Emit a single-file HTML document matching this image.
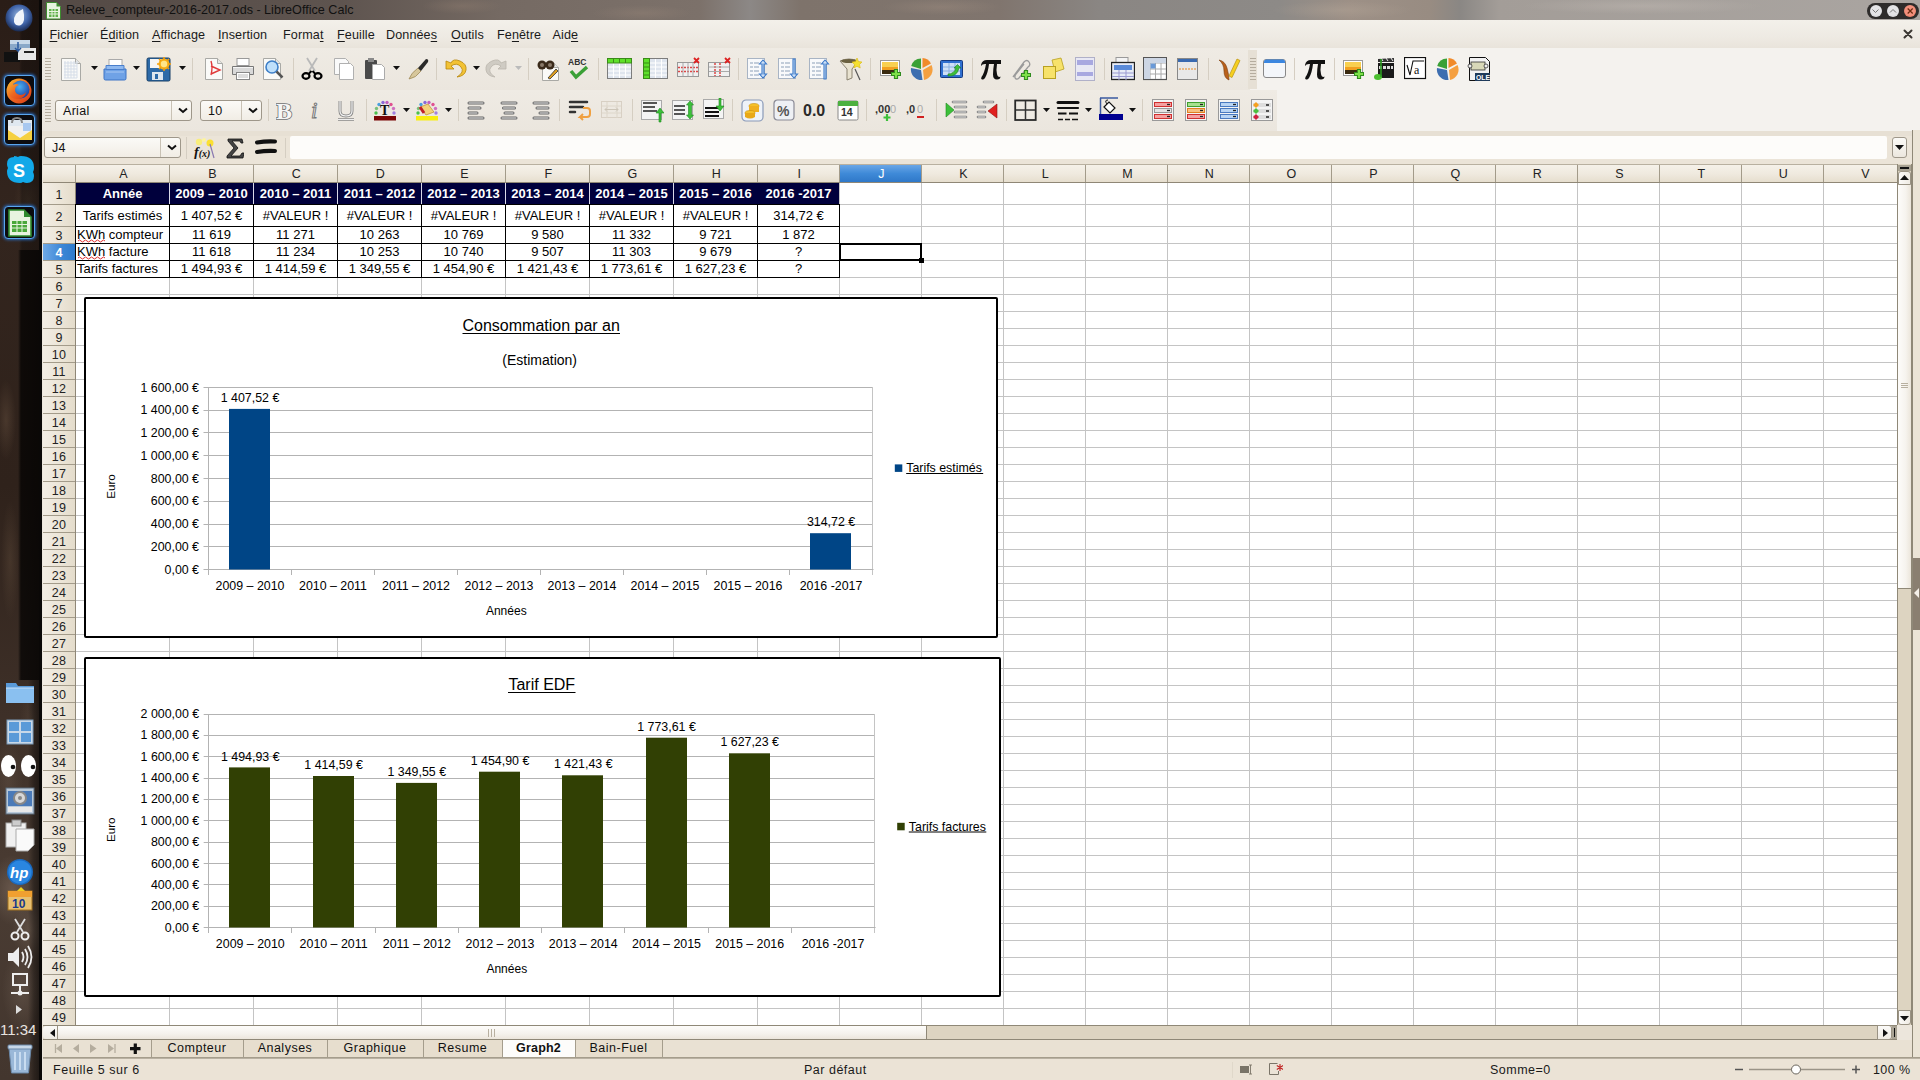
<!DOCTYPE html><html><head><meta charset="utf-8"><title>LibreOffice Calc</title><style>

html,body{margin:0;padding:0;width:1920px;height:1080px;overflow:hidden;background:#ece6dc;font-family:"Liberation Sans", sans-serif;}
div{box-sizing:border-box;}
.ic{position:absolute;}

</style></head><body>
<div style="position:absolute;left:0px;top:0px;width:42px;height:1080px;background:radial-gradient(ellipse 10px 40px at 6px 420px, rgba(120,95,75,.35), transparent),radial-gradient(ellipse 9px 60px at 10px 560px, rgba(110,88,68,.3), transparent),radial-gradient(ellipse 22px 35px at 12px 890px, rgba(140,120,105,.45), transparent),radial-gradient(ellipse 18px 30px at 30px 930px, rgba(130,112,98,.4), transparent),radial-gradient(ellipse 20px 40px at 22px 990px, rgba(120,104,92,.4), transparent),radial-gradient(ellipse 15px 40px at 8px 780px, rgba(110,92,78,.35), transparent),radial-gradient(ellipse 12px 30px at 32px 720px, rgba(100,84,70,.3), transparent),radial-gradient(ellipse 14px 25px at 28px 200px, rgba(100,80,62,.3), transparent),linear-gradient(180deg,#2a1d17 0%,#33251e 20%,#2f221b 45%,#3d2f27 65%,#4a3c33 82%,#43362e 100%);"></div>
<div style="position:absolute;left:0px;top:250px;width:42px;height:430px;background:linear-gradient(90deg, rgba(0,0,0,0) 0px, rgba(0,0,0,0) 18px, rgba(0,0,0,.72) 21px, rgba(0,0,0,.78) 39px);"></div>
<div style="position:absolute;left:0px;top:0px;width:42px;height:250px;background:linear-gradient(90deg, rgba(0,0,0,0) 0px, rgba(0,0,0,0) 19px, rgba(0,0,0,.3) 22px, rgba(0,0,0,.35) 39px);"></div>
<div style="position:absolute;left:0px;top:680px;width:42px;height:400px;background:linear-gradient(90deg, rgba(0,0,0,0) 0px, rgba(0,0,0,0) 28px, rgba(0,0,0,.35) 34px, rgba(0,0,0,.5) 39px);"></div>
<div style="position:absolute;left:39px;top:0px;width:3px;height:1080px;background:#0a0807;"></div>
<div style="position:absolute;left:42px;top:0px;width:1878px;height:20px;background:radial-gradient(ellipse 40px 8px at 420px 6px, rgba(150,130,115,.35), transparent),radial-gradient(ellipse 50px 8px at 600px 13px, rgba(160,140,125,.3), transparent),radial-gradient(ellipse 60px 8px at 900px 7px, rgba(170,150,135,.3), transparent),radial-gradient(ellipse 70px 9px at 1300px 10px, rgba(185,170,155,.35), transparent),radial-gradient(ellipse 120px 8px at 1600px 6px, rgba(200,192,185,.35), transparent),linear-gradient(90deg,#544a45 0%,#5e544f 15.9%,#756a63 24.4%,#7c716a 35%,#8c8886 37.7%,#7e736b 40.4%,#80756e 51%,#8a8683 56.3%,#8d8a87 65.9%,#9d9086 69.6%,#988c82 73.9%,#8a8784 75.5%,#a39d98 77.6%,#aaa5a1 100%);"></div>
<svg class="ic" style="left:45px;top:1px" width="17" height="19" viewBox="0 0 17 19"><path d="M1.5 1.5h10l4 4v12.5h-14z" fill="#e8f3e0" stroke="#3d8a2e"/><path d="M11.5 1.5v4h4z" fill="#3d8a2e"/><rect x="4" y="8" width="9" height="8" fill="#5fb14a"/><path d="M4 10.5h9M4 13h9M7 8v8M10 8v8" stroke="#e8f3e0" stroke-width="1"/></svg>
<div style="position:absolute;left:66px;top:3.5px;font-size:12.6px;line-height:1;color:#111;font-weight:normal;white-space:nowrap;letter-spacing:0px;">Releve_compteur-2016-2017.ods - LibreOffice Calc</div>
<div style="position:absolute;left:1867px;top:3px;width:52px;height:16px;background:#2e2c2b;border-radius:8px;"></div>
<div style="position:absolute;left:1869.5px;top:5px;width:12px;height:12px;border-radius:6px;background:radial-gradient(circle at 50% 40%, #e4e4e6 55%, #c8c8cc);"></div>
<div style="position:absolute;left:1887px;top:5px;width:12px;height:12px;border-radius:6px;background:radial-gradient(circle at 50% 40%, #e4e4e6 55%, #c8c8cc);"></div>
<div style="position:absolute;left:1904.2px;top:5px;width:12px;height:12px;border-radius:6px;background:radial-gradient(circle at 50% 40%, #f3907c 55%, #e06a50);"></div>
<svg class="ic" style="left:1867px;top:3px" width="53" height="16" viewBox="0 0 53 16"><path d="M5.5 6.5l3 3 3-3" fill="none" stroke="#777" stroke-width="1"/><path d="M23 9.5l3-3 3 3" fill="none" stroke="#777" stroke-width="1"/><path d="M40.7 5.5l5 5M45.7 5.5l-5 5" fill="none" stroke="#6a2a10" stroke-width="1.2"/></svg>
<div style="position:absolute;left:42px;top:20px;width:1878px;height:28px;background:linear-gradient(180deg,#f3f0ea 0%,#eeeae3 60%,#e9e4db 100%);"></div>
<div style="position:absolute;left:49.5px;top:29px;font-size:12.6px;line-height:1;color:#1a1a1a;font-weight:normal;white-space:nowrap;letter-spacing:0.1px;text-underline-offset:1.5px;"><u>F</u>ichier</div>
<div style="position:absolute;left:100px;top:29px;font-size:12.6px;line-height:1;color:#1a1a1a;font-weight:normal;white-space:nowrap;letter-spacing:0.1px;text-underline-offset:1.5px;">É<u>d</u>ition</div>
<div style="position:absolute;left:152px;top:29px;font-size:12.6px;line-height:1;color:#1a1a1a;font-weight:normal;white-space:nowrap;letter-spacing:0.1px;text-underline-offset:1.5px;"><u>A</u>ffichage</div>
<div style="position:absolute;left:218px;top:29px;font-size:12.6px;line-height:1;color:#1a1a1a;font-weight:normal;white-space:nowrap;letter-spacing:0.1px;text-underline-offset:1.5px;"><u>I</u>nsertion</div>
<div style="position:absolute;left:283px;top:29px;font-size:12.6px;line-height:1;color:#1a1a1a;font-weight:normal;white-space:nowrap;letter-spacing:0.1px;text-underline-offset:1.5px;">Forma<u>t</u></div>
<div style="position:absolute;left:337px;top:29px;font-size:12.6px;line-height:1;color:#1a1a1a;font-weight:normal;white-space:nowrap;letter-spacing:0.1px;text-underline-offset:1.5px;"><u>F</u>euille</div>
<div style="position:absolute;left:386px;top:29px;font-size:12.6px;line-height:1;color:#1a1a1a;font-weight:normal;white-space:nowrap;letter-spacing:0.1px;text-underline-offset:1.5px;">Donnée<u>s</u></div>
<div style="position:absolute;left:451px;top:29px;font-size:12.6px;line-height:1;color:#1a1a1a;font-weight:normal;white-space:nowrap;letter-spacing:0.1px;text-underline-offset:1.5px;"><u>O</u>utils</div>
<div style="position:absolute;left:497px;top:29px;font-size:12.6px;line-height:1;color:#1a1a1a;font-weight:normal;white-space:nowrap;letter-spacing:0.1px;text-underline-offset:1.5px;">Fe<u>n</u>être</div>
<div style="position:absolute;left:552.5px;top:29px;font-size:12.6px;line-height:1;color:#1a1a1a;font-weight:normal;white-space:nowrap;letter-spacing:0.1px;text-underline-offset:1.5px;">Aid<u>e</u></div>
<svg class="ic" style="left:1903px;top:29px" width="10" height="10" viewBox="0 0 10 10"><path d="M1.5 1.5l7 7M8.5 1.5l-7 7" stroke="#3a3632" stroke-width="2" stroke-linecap="round"/></svg>
<div style="position:absolute;left:42px;top:48px;width:1878px;height:83px;background:#f4f2ee;"></div>
<div style="position:absolute;left:42px;top:48px;width:1208px;height:42px;background:linear-gradient(180deg,#efebe4,#ebe6de);"></div>
<div style="position:absolute;left:42px;top:90px;width:1235px;height:41px;background:linear-gradient(180deg,#efebe4,#ebe6de);"></div>
<div style="position:absolute;left:1248px;top:50px;width:9px;height:39px;background:#e6e0d5;"></div>
<div style="position:absolute;left:42px;top:131px;width:1878px;height:5px;background:#e7e0d4;"></div>
<svg class="ic" style="left:45px;top:58px" width="6" height="24" viewBox="0 0 6 24"><path d="M0 0.5h6" stroke="#b5ad9f" stroke-width="1"/><path d="M0 3.5h6" stroke="#b5ad9f" stroke-width="1"/><path d="M0 6.5h6" stroke="#b5ad9f" stroke-width="1"/><path d="M0 9.5h6" stroke="#b5ad9f" stroke-width="1"/><path d="M0 12.5h6" stroke="#b5ad9f" stroke-width="1"/><path d="M0 15.5h6" stroke="#b5ad9f" stroke-width="1"/><path d="M0 18.5h6" stroke="#b5ad9f" stroke-width="1"/><path d="M0 21.5h6" stroke="#b5ad9f" stroke-width="1"/></svg>
<svg class="ic" style="left:45px;top:100px" width="6" height="22" viewBox="0 0 6 22"><path d="M0 0.5h6" stroke="#b5ad9f" stroke-width="1"/><path d="M0 3.5h6" stroke="#b5ad9f" stroke-width="1"/><path d="M0 6.5h6" stroke="#b5ad9f" stroke-width="1"/><path d="M0 9.5h6" stroke="#b5ad9f" stroke-width="1"/><path d="M0 12.5h6" stroke="#b5ad9f" stroke-width="1"/><path d="M0 15.5h6" stroke="#b5ad9f" stroke-width="1"/><path d="M0 18.5h6" stroke="#b5ad9f" stroke-width="1"/><path d="M0 21.5h6" stroke="#b5ad9f" stroke-width="1"/></svg>
<svg class="ic" style="left:1250px;top:58px" width="6" height="24" viewBox="0 0 6 24"><path d="M0 0.5h6" stroke="#b5ad9f" stroke-width="1"/><path d="M0 3.5h6" stroke="#b5ad9f" stroke-width="1"/><path d="M0 6.5h6" stroke="#b5ad9f" stroke-width="1"/><path d="M0 9.5h6" stroke="#b5ad9f" stroke-width="1"/><path d="M0 12.5h6" stroke="#b5ad9f" stroke-width="1"/><path d="M0 15.5h6" stroke="#b5ad9f" stroke-width="1"/><path d="M0 18.5h6" stroke="#b5ad9f" stroke-width="1"/><path d="M0 21.5h6" stroke="#b5ad9f" stroke-width="1"/></svg>
<svg class="ic" style="left:59px;top:57px" width="22" height="24" viewBox="0 0 22 24"><path d="M2.5 1.5h14l5 5v17h-19z" fill="#fafaf8" stroke="#a9a9a5"/><path d="M16.5 1.5v5h5" fill="#e6e6e2" stroke="#a9a9a5"/><path d="M5 6h13" stroke="#d5dde8"/><path d="M5 9h13" stroke="#d5dde8"/><path d="M5 12h13" stroke="#d5dde8"/><path d="M5 15h13" stroke="#d5dde8"/><path d="M5 18h13" stroke="#d5dde8"/><path d="M5 21h13" stroke="#d5dde8"/><path d="M6 4v17" stroke="#d5dde8"/><path d="M9 4v17" stroke="#d5dde8"/><path d="M12 4v17" stroke="#d5dde8"/><path d="M15 4v17" stroke="#d5dde8"/><path d="M18 4v17" stroke="#d5dde8"/></svg>
<svg class="ic" style="left:91px;top:66px" width="7" height="4" viewBox="0 0 7 4"><path d="M0 0h7l-3.5 4z" fill="#111"/></svg>
<svg class="ic" style="left:103px;top:57px" width="24" height="24" viewBox="0 0 24 24"><rect x="6" y="2.5" width="13" height="11" fill="#fff" stroke="#aaa"/><path d="M1 12h22v9.5q0 1.5-1.5 1.5h-19q-1.5 0-1.5-1.5z" fill="#6fa2e6" stroke="#3f74c5"/><path d="M3 8.5h18v4H3z" fill="#8fb9f0" stroke="#4a7fcc"/><path d="M3 15h18" stroke="#a9c8f3"/></svg>
<svg class="ic" style="left:133px;top:66px" width="7" height="4" viewBox="0 0 7 4"><path d="M0 0h7l-3.5 4z" fill="#111"/></svg>
<svg class="ic" style="left:146px;top:57px" width="25" height="25" viewBox="0 0 25 25"><rect x="1" y="1" width="23" height="23" rx="1.5" fill="#2d6aa8" stroke="#173e66"/><rect x="4" y="2" width="14" height="9" fill="#f4f4f4"/><rect x="6" y="15" width="11" height="8" fill="#dde6ee"/><rect x="9" y="17" width="3" height="5" fill="#2d6aa8"/><circle cx="18" cy="7" r="5.5" fill="#f7b11a"/><circle cx="18" cy="7" r="3.2" fill="#fde58a"/><path d="M18 0v3M18 11v3M11 7h3M22 7h3M13 2l2 2M21 10l2 2M23 2l-2 2M13 12l2-2" stroke="#f59e0b" stroke-width="1.5"/></svg>
<svg class="ic" style="left:179px;top:66px" width="7" height="4" viewBox="0 0 7 4"><path d="M0 0h7l-3.5 4z" fill="#111"/></svg>
<div style="position:absolute;left:192px;top:58px;width:1px;height:22px;background:#d5cec2;"></div>
<svg class="ic" style="left:203px;top:57px" width="22" height="24" viewBox="0 0 22 24"><path d="M2.5 1.5h12l5 5v16h-17z" fill="#fafaf8" stroke="#a9a9a5"/><path d="M14.5 1.5v5h5" fill="#e6e6e2" stroke="#a9a9a5"/><path d="M8 4q2 6 0 14M8 9l9 4-9 4" fill="none" stroke="#e03a3a" stroke-width="1.4"/></svg>
<svg class="ic" style="left:231px;top:57px" width="24" height="24" viewBox="0 0 24 24"><rect x="6" y="1.5" width="12" height="7" fill="#fff" stroke="#999"/><path d="M1.5 9.5h21v8h-21z" fill="#d9d9d9" stroke="#777"/><path d="M2 10.5h20" stroke="#f5f5f5"/><rect x="5.5" y="15.5" width="13" height="7" fill="#fff" stroke="#888"/><path d="M7 18h10M7 20h10" stroke="#bbb"/></svg>
<svg class="ic" style="left:262px;top:57px" width="22" height="23" viewBox="0 0 22 23"><path d="M1.5 1.5h12l5 5v16h-17z" fill="#fafaf8" stroke="#a9a9a5"/><path d="M13.5 1.5v5h5" fill="#e6e6e2" stroke="#a9a9a5"/><circle cx="10" cy="10" r="6" fill="#bfe0fb" stroke="#3d7fc8" stroke-width="1.6"/><path d="M14.5 14.5l6 6" stroke="#555" stroke-width="2.5"/></svg>
<div style="position:absolute;left:293px;top:58px;width:1px;height:22px;background:#d5cec2;"></div>
<svg class="ic" style="left:301px;top:57px" width="22" height="23" viewBox="0 0 22 23"><path d="M6 1l8 13M16 1l-8 13" stroke="#b9b9b9" stroke-width="1.8"/><ellipse cx="5" cy="19" rx="3.5" ry="2.8" fill="none" stroke="#000" stroke-width="2.2"/><ellipse cx="17" cy="19" rx="3.5" ry="2.8" fill="none" stroke="#000" stroke-width="2.2"/><path d="M7.5 17l3-3M14.5 17l-3-3" stroke="#000" stroke-width="2"/></svg>
<svg class="ic" style="left:333px;top:57px" width="22" height="24" viewBox="0 0 22 24"><path d="M1.5 1.5h11l3 3v13h-14z" fill="#fafafa" stroke="#b0b0b0"/><path d="M6.5 6.5h11l3 3v13h-14z" fill="#fff" stroke="#b0b0b0"/></svg>
<svg class="ic" style="left:364px;top:57px" width="22" height="24" viewBox="0 0 22 24"><rect x="1" y="3" width="12" height="19" rx="1" fill="#4a4a4a"/><rect x="4" y="1" width="6" height="4" fill="#8a8a8a"/><path d="M8.5 7.5h9l3 3v12h-12z" fill="#fff" stroke="#aaa"/></svg>
<svg class="ic" style="left:393px;top:66px" width="7" height="4" viewBox="0 0 7 4"><path d="M0 0h7l-3.5 4z" fill="#111"/></svg>
<svg class="ic" style="left:406px;top:57px" width="24" height="24" viewBox="0 0 24 24"><path d="M3 22q2-6 9-11l3 3q-5 7-12 8z" fill="#d7c79c" stroke="#9f8c5c" stroke-width=".8"/><path d="M12 11l8-9q3 0 2 3l-7 9z" fill="#2a2a2a"/></svg>
<div style="position:absolute;left:436px;top:58px;width:1px;height:22px;background:#d5cec2;"></div>
<svg class="ic" style="left:443px;top:57px" width="24" height="24" viewBox="0 0 24 24"><path d="M3 4v8h8l-3-3q6-4 10 1t-4 10q8-1 9-7t-6-9-9 2z" fill="#f2c235" stroke="#b8860b" stroke-width=".8"/></svg>
<svg class="ic" style="left:473px;top:66px" width="7" height="4" viewBox="0 0 7 4"><path d="M0 0h7l-3.5 4z" fill="#111"/></svg>
<svg class="ic" style="left:485px;top:57px" width="24" height="24" viewBox="0 0 24 24"><path d="M21 4v8h-8l3-3q-6-4-10 1t4 10q-8-1-9-7t6-9 9 2z" fill="#cfcbc3" stroke="#bab5ac" stroke-width=".8"/></svg>
<svg class="ic" style="left:515px;top:66px" width="7" height="4" viewBox="0 0 7 4"><path d="M0 0h7l-3.5 4z" fill="#bbb"/></svg>
<div style="position:absolute;left:528px;top:58px;width:1px;height:22px;background:#d5cec2;"></div>
<svg class="ic" style="left:536px;top:57px" width="23" height="24" viewBox="0 0 23 24"><path d="M6.5 5.5h11l5 5v13h-16z" fill="#fafaf8" stroke="#a9a9a5"/><path d="M17.5 5.5v5h5" fill="#e6e6e2" stroke="#a9a9a5"/><circle cx="6" cy="8" r="4.5" fill="#3a2a1a"/><circle cx="14" cy="8" r="4.5" fill="#3a2a1a"/><circle cx="6" cy="8" r="2" fill="#8a7a6a"/><circle cx="14" cy="8" r="2" fill="#8a7a6a"/><path d="M12 21l8-9 2 2-8 8z" fill="#e0a020" stroke="#333" stroke-width=".8"/></svg>
<svg class="ic" style="left:567px;top:57px" width="24" height="24" viewBox="0 0 24 24"><text x="1" y="8" font-family="Liberation Sans" font-size="8.5" font-weight="bold" fill="#333">ABC</text><path d="M4 14l5 6 11-10" fill="none" stroke="#3aa036" stroke-width="3.5"/></svg>
<div style="position:absolute;left:598px;top:58px;width:1px;height:22px;background:#d5cec2;"></div>
<svg class="ic" style="left:606px;top:57px" width="27" height="24" viewBox="0 0 27 24"><rect x="1.5" y="1.5" width="24" height="20" fill="#dfe5ee" stroke="#7d7d7d"/><path d="M2 6h23" stroke="#fff" stroke-width="1"/><path d="M2 10h23" stroke="#fff" stroke-width="1"/><path d="M2 14h23" stroke="#fff" stroke-width="1"/><path d="M2 18h23" stroke="#fff" stroke-width="1"/><path d="M7.5 2v19" stroke="#fff" stroke-width="1"/><path d="M13.5 2v19" stroke="#fff" stroke-width="1"/><path d="M19.5 2v19" stroke="#fff" stroke-width="1"/><rect x="1.5" y="1.5" width="24" height="4.5" fill="#5ee02a" stroke="#3a8a18" stroke-width="1"/><path d="M7.5 2v4" stroke="#3a8a18" stroke-width="1"/><path d="M13.5 2v4" stroke="#3a8a18" stroke-width="1"/><path d="M19.5 2v4" stroke="#3a8a18" stroke-width="1"/></svg>
<svg class="ic" style="left:642px;top:57px" width="27" height="24" viewBox="0 0 27 24"><rect x="1.5" y="1.5" width="24" height="20" fill="#dfe5ee" stroke="#7d7d7d"/><path d="M2 6h23" stroke="#fff" stroke-width="1"/><path d="M2 10h23" stroke="#fff" stroke-width="1"/><path d="M2 14h23" stroke="#fff" stroke-width="1"/><path d="M2 18h23" stroke="#fff" stroke-width="1"/><path d="M7.5 2v19" stroke="#fff" stroke-width="1"/><path d="M13.5 2v19" stroke="#fff" stroke-width="1"/><path d="M19.5 2v19" stroke="#fff" stroke-width="1"/><rect x="1.5" y="1.5" width="6" height="20" fill="#5ee02a" stroke="#3a8a18" stroke-width="1"/><path d="M2 6h5" stroke="#3a8a18" stroke-width="1"/><path d="M2 10h5" stroke="#3a8a18" stroke-width="1"/><path d="M2 14h5" stroke="#3a8a18" stroke-width="1"/><path d="M2 18h5" stroke="#3a8a18" stroke-width="1"/></svg>
<svg class="ic" style="left:676px;top:57px" width="24" height="24" viewBox="0 0 24 24"><rect x="1.5" y="5.5" width="21" height="14" fill="#f0f0f0" stroke="#999"/><path d="M2 10.5h20M2 14.5h20" stroke="#d44" stroke-width="1.5" stroke-dasharray="2 1"/><path d="M7 6v13M12 6v13M17 6v13" stroke="#aaa"/><path d="M18 1l5 5M23 1l-5 5" stroke="#d22" stroke-width="1.8"/></svg>
<svg class="ic" style="left:707px;top:57px" width="24" height="24" viewBox="0 0 24 24"><rect x="1.5" y="5.5" width="21" height="14" fill="#f0f0f0" stroke="#999"/><path d="M8 6v13M13 6v13" stroke="#d44" stroke-width="1.5" stroke-dasharray="2 1"/><path d="M2 10h20M2 14.5h20" stroke="#aaa"/><path d="M18 1l5 5M23 1l-5 5" stroke="#d22" stroke-width="1.8"/></svg>
<div style="position:absolute;left:738px;top:58px;width:1px;height:22px;background:#d5cec2;"></div>
<svg class="ic" style="left:746px;top:57px" width="22" height="24" viewBox="0 0 22 24"><rect x="1.5" y="1.5" width="17" height="20" fill="#f8f9fb" stroke="#a8b4c4"/><path d="M4 6h3M8 6h5M4 10h3M8 10h5M4 14h3M8 14h5M4 18h3M8 18h5" stroke="#8da0b8"/><path d="M17 3l-3.5 4h2.5v10h-2.5l3.5 4 3.5-4h-2.5v-10h2.5z" fill="#cde0f7" stroke="#3a78c8" stroke-width="1.1"/></svg>
<svg class="ic" style="left:777px;top:57px" width="22" height="24" viewBox="0 0 22 24"><rect x="1.5" y="1.5" width="17" height="20" fill="#f8f9fb" stroke="#a8b4c4"/><path d="M4 6h3M8 6h5M4 10h3M8 10h5M4 14h3M8 14h5M4 18h3M8 18h5" stroke="#8da0b8"/><path d="M16 2v15h-2.5l3.5 4 3.5-4h-2.5v-15z" fill="#cde0f7" stroke="#3a78c8" stroke-width="1.1"/></svg>
<svg class="ic" style="left:808px;top:57px" width="22" height="24" viewBox="0 0 22 24"><rect x="1.5" y="1.5" width="17" height="20" fill="#f8f9fb" stroke="#a8b4c4"/><path d="M4 6h3M8 6h5M4 10h3M8 10h5M4 14h3M8 14h5M4 18h3M8 18h5" stroke="#8da0b8"/><path d="M16 22v-15h-2.5l3.5-4 3.5 4h-2.5v15z" fill="#cde0f7" stroke="#3a78c8" stroke-width="1.1"/></svg>
<svg class="ic" style="left:839px;top:57px" width="24" height="24" viewBox="0 0 24 24"><path d="M1 4q9-4 18 0l-6 8v9l-5 2v-11z" fill="#e8e2d0" stroke="#8a8270"/><ellipse cx="10" cy="4" rx="8" ry="2" fill="#6a6040"/><path d="M18 1l1.5 3.5 3.5.5-2.5 2.5.7 3.5-3.2-1.7-3.2 1.7.7-3.5-2.5-2.5 3.5-.5z" fill="#f5e030" stroke="#d8b810" stroke-width=".6"/><path d="M16 12l5 11" stroke="#555" stroke-width="1.2"/></svg>
<div style="position:absolute;left:870px;top:58px;width:1px;height:22px;background:#d5cec2;"></div>
<svg class="ic" style="left:879px;top:57px" width="24" height="24" viewBox="0 0 24 24"><rect x="1.5" y="3.5" width="19" height="15" fill="#fff" stroke="#999"/><rect x="3" y="5" width="16" height="12" fill="#f0a020"/><rect x="3" y="5" width="16" height="5" fill="#f8d050"/><path d="M3 13h16v4H3z" fill="#3a2a10"/><path d="M17 12v10M12 17h10" stroke="#2e8b1e" stroke-width="4.2"/><path d="M17 13v8M13 17h8" stroke="#7ee04a" stroke-width="2.2"/></svg>
<svg class="ic" style="left:910px;top:57px" width="23" height="24" viewBox="0 0 23 24"><path d="M11 12L11 1.5A10.5 10.5 0 0 0 1.2 9z" fill="#3aa036"/><path d="M12.5 11L12.5 1A10.5 10.5 0 0 1 21 6.5z" fill="#f18a2a"/><path d="M13 13L21.5 8A10.5 10.5 0 0 1 14 23z" fill="#f5a040"/><path d="M11 13L12.5 23A10.5 10.5 0 0 1 1 11z" fill="#3d6eb0"/></svg>
<svg class="ic" style="left:940px;top:57px" width="24" height="24" viewBox="0 0 24 24"><rect x="0.5" y="3.5" width="22" height="17" rx="1" fill="#2f6fd0" stroke="#163a80"/><rect x="3" y="6" width="17" height="12" fill="#cfe0f7"/><path d="M3 10h17M3 14h17M9 6v12M15 6v12" stroke="#8ab0e0"/><path d="M8 17q6 0 8-6l-2 0 3.5-3.5 3.5 3.5h-2q-2 9-11 8z" fill="#3cc03a" stroke="#207a20" stroke-width=".6"/></svg>
<div style="position:absolute;left:972px;top:58px;width:1px;height:22px;background:#d5cec2;"></div>
<svg class="ic" style="left:979px;top:57px" width="24" height="24" viewBox="0 0 24 24"><path d="M2 8q1-5 6-5h14v4h-4q-1 6 0 10q.5 3 2.5 3l1-.5q0 3-3.5 3q-4 0-4-5q0-5 1-10.5h-5q-1 9-4 14q-1.5 2-3 1.5t-.5-2.5q3-4 4.5-13h-1q-3 0-4 2z" fill="#111"/></svg>
<svg class="ic" style="left:1010px;top:57px" width="24" height="24" viewBox="0 0 24 24"><path d="M3 20L14 5q3-3 5 0t-1 5L9 21q-2 2-3.5 .5T6 17l8-10" fill="none" stroke="#9a9a9a" stroke-width="1.3"/><path d="M16 13v10M11 18h10" stroke="#2e8b1e" stroke-width="4.2"/><path d="M16 14v8M12 18h8" stroke="#7ee04a" stroke-width="2.2"/></svg>
<svg class="ic" style="left:1042px;top:57px" width="24" height="24" viewBox="0 0 24 24"><path d="M10 3l9-2 3 11-9 3z" fill="#f7e26a" stroke="#b8a020" stroke-width=".8"/><rect x="1.5" y="9.5" width="12" height="12" fill="#f7e26a" stroke="#b8a020"/></svg>
<svg class="ic" style="left:1074px;top:57px" width="22" height="24" viewBox="0 0 22 24"><rect x="1.5" y="0.5" width="19" height="23" fill="#e8e8f4" stroke="#b0b0c8"/><rect x="3" y="3" width="16" height="5" fill="#a8a8e0"/><rect x="3" y="15" width="16" height="4" fill="#a8a8e0"/></svg>
<div style="position:absolute;left:1104px;top:58px;width:1px;height:22px;background:#d5cec2;"></div>
<svg class="ic" style="left:1111px;top:57px" width="24" height="24" viewBox="0 0 24 24"><rect x="5" y="0.5" width="12" height="6" fill="#f4f4f4" stroke="#999"/><rect x="0.5" y="5.5" width="23" height="17" fill="#e8ecf6" stroke="#222" stroke-width="1.3"/><path d="M3 8h18v5H3z" fill="#5a8ad8"/><path d="M1 16h22M1 19.5h22M8 13v10M15 13v10" stroke="#9a9ad0"/></svg>
<svg class="ic" style="left:1143px;top:57px" width="24" height="24" viewBox="0 0 24 24"><rect x="0.5" y="0.5" width="23" height="22" fill="#fff" stroke="#555" stroke-width="1.2"/><path d="M1 6h22M1 12h22M1 17h22M7 1v21M12.5 1v21M18 1v21" stroke="#aaa"/><rect x="1" y="1" width="6" height="21" fill="#cdd6e4"/><rect x="1" y="1" width="22" height="5" fill="#cdd6e4"/><rect x="7.5" y="6.5" width="5" height="5" fill="#6a9ad8"/></svg>
<svg class="ic" style="left:1177px;top:58px" width="22" height="23" viewBox="0 0 22 23"><rect x="0.5" y="0.5" width="20" height="21" fill="#e8e8e8" stroke="#888"/><rect x="1" y="1" width="19" height="3" fill="#3a6ab0"/><path d="M2 11h17" stroke="#e88a20" stroke-dasharray="2 1"/></svg>
<div style="position:absolute;left:1208px;top:58px;width:1px;height:22px;background:#d5cec2;"></div>
<svg class="ic" style="left:1218px;top:57px" width="24" height="24" viewBox="0 0 24 24"><path d="M1 3q6 1 8 8t2 12q-5-2-5-9T1 3z" fill="#b9601a" stroke="#7a3a0a" stroke-width=".6"/><path d="M11 19l8-17 3 1.5-8 17z" fill="#f6d020" stroke="#b89010" stroke-width=".7"/></svg>
<svg class="ic" style="left:1263px;top:58px" width="24" height="22" viewBox="0 0 24 22"><rect x="0.5" y="1.5" width="22" height="18" rx="2.5" fill="#f3f6fa" stroke="#888"/><path d="M1 4q0-2.5 2.5-2.5h16q2.5 0 2.5 2.5v1H1z" fill="#3a86e0"/></svg>
<div style="position:absolute;left:1294px;top:58px;width:1px;height:22px;background:#d5cec2;"></div>
<svg class="ic" style="left:1303px;top:57px" width="24" height="24" viewBox="0 0 24 24"><path d="M2 8q1-5 6-5h14v4h-4q-1 6 0 10q.5 3 2.5 3l1-.5q0 3-3.5 3q-4 0-4-5q0-5 1-10.5h-5q-1 9-4 14q-1.5 2-3 1.5t-.5-2.5q3-4 4.5-13h-1q-3 0-4 2z" fill="#111"/></svg>
<div style="position:absolute;left:1334px;top:58px;width:1px;height:22px;background:#d5cec2;"></div>
<svg class="ic" style="left:1342px;top:57px" width="24" height="24" viewBox="0 0 24 24"><rect x="1.5" y="3.5" width="19" height="15" fill="#fff" stroke="#999"/><rect x="3" y="5" width="16" height="12" fill="#f0a020"/><rect x="3" y="5" width="16" height="5" fill="#f8d050"/><path d="M3 13h16v4H3z" fill="#3a2a10"/><path d="M17 12v10M12 17h10" stroke="#2e8b1e" stroke-width="4.2"/><path d="M17 13v8M13 17h8" stroke="#7ee04a" stroke-width="2.2"/></svg>
<svg class="ic" style="left:1373px;top:57px" width="23" height="24" viewBox="0 0 23 24"><path d="M5 6h16v15H5z" fill="#1a1a1a"/><path d="M6 9h3v3H6zM10 9h3v3h-3zM14 9h3v3h-3zM18 9h2v3h-2z" fill="#ddd"/><path d="M5 2l16-1v4H5z" fill="#333"/><path d="M8 1l2 3M13 1l2 3M18 1l2 3" stroke="#eee"/><ellipse cx="5" cy="20" rx="4" ry="3" fill="#4cc030"/><path d="M8 20V2" stroke="#2a9a20" stroke-width="1.6"/></svg>
<svg class="ic" style="left:1404px;top:57px" width="23" height="23" viewBox="0 0 23 23"><rect x="0.5" y="0.5" width="21" height="21" fill="#fff" stroke="#111" stroke-width="1.2"/><path d="M3 8l3 10 3-14h11" fill="none" stroke="#111" stroke-width="1.1"/><text x="10" y="17" font-family="Liberation Serif" font-size="12" fill="#111">a</text></svg>
<svg class="ic" style="left:1436px;top:57px" width="23" height="24" viewBox="0 0 23 24"><path d="M11 12L11 1.5A10.5 10.5 0 0 0 1.2 9z" fill="#3aa036"/><path d="M12.5 11L12.5 1A10.5 10.5 0 0 1 21 6.5z" fill="#f18a2a"/><path d="M13 13L21.5 8A10.5 10.5 0 0 1 14 23z" fill="#f5a040"/><path d="M11 13L12.5 23A10.5 10.5 0 0 1 1 11z" fill="#3d6eb0"/></svg>
<svg class="ic" style="left:1467px;top:57px" width="25" height="25" viewBox="0 0 25 25"><path d="M2.5 0.5h16l4 4v19h-20z" fill="#f2f2f2" stroke="#111"/><rect x="4" y="5" width="14" height="8" fill="#d8d8b8" stroke="#333" stroke-width=".8"/><circle cx="3" cy="9" r="2" fill="#eee" stroke="#333" stroke-width=".8"/><circle cx="19" cy="9" r="2" fill="#eee" stroke="#333" stroke-width=".8"/><rect x="8" y="16" width="15" height="8" fill="#1f3a5a"/><text x="9" y="23" font-family="Liberation Sans" font-size="6.8" font-weight="bold" fill="#fff">OLE</text></svg>
<div style="position:absolute;left:55px;top:100px;width:137px;height:21px;background:linear-gradient(180deg,#fbfaf7,#f1ede5);border:1px solid #9e978a;border-radius:3px;"></div><div style="position:absolute;left:171px;top:101px;width:1px;height:19px;background:#c9c2b5;"></div><svg class="ic" style="left:178px;top:107px" width="10" height="7" viewBox="0 0 10 7"><path d="M1 1.5l4 3.5 4-3.5" fill="none" stroke="#111" stroke-width="2"/></svg><div style="position:absolute;left:63px;top:105px;font-size:12.5px;line-height:1;color:#111;font-weight:normal;white-space:nowrap;letter-spacing:0.3px;">Arial</div>
<div style="position:absolute;left:200px;top:100px;width:62px;height:21px;background:linear-gradient(180deg,#fbfaf7,#f1ede5);border:1px solid #9e978a;border-radius:3px;"></div><div style="position:absolute;left:241px;top:101px;width:1px;height:19px;background:#c9c2b5;"></div><svg class="ic" style="left:248px;top:107px" width="10" height="7" viewBox="0 0 10 7"><path d="M1 1.5l4 3.5 4-3.5" fill="none" stroke="#111" stroke-width="2"/></svg><div style="position:absolute;left:208px;top:105px;font-size:12.5px;line-height:1;color:#111;font-weight:normal;white-space:nowrap;letter-spacing:0.3px;">10</div>
<div style="position:absolute;left:268px;top:99px;width:1px;height:22px;background:#d5cec2;"></div>
<svg class="ic" style="left:276px;top:99px" width="19" height="22" viewBox="0 0 19 22"><text x="0" y="19.5" font-family="Liberation Serif" font-size="24" font-weight="bold" fill="#f6f6f6" stroke="#707070" stroke-width="1.6" paint-order="stroke">B</text></svg>
<svg class="ic" style="left:311px;top:99px" width="12" height="22" viewBox="0 0 12 22"><text x="0" y="19" font-family="Liberation Serif" font-size="23" font-style="italic" fill="#f4f4f4" stroke="#777" stroke-width="1">i</text></svg>
<svg class="ic" style="left:337px;top:99px" width="19" height="23" viewBox="0 0 19 23"><path d="M3 2v10q0 5 6 5t6-5V2" fill="none" stroke="#888" stroke-width="3"/><path d="M3 2v10q0 5 6 5t6-5V2" fill="none" stroke="#f4f4f4" stroke-width="1.2"/><path d="M1 20.5h16" stroke="#888" stroke-width="2.5"/><path d="M1 20.5h16" stroke="#eee" stroke-width="1"/></svg>
<div style="position:absolute;left:366px;top:99px;width:1px;height:22px;background:#d5cec2;"></div>
<svg class="ic" style="left:373px;top:98px" width="24" height="23" viewBox="0 0 24 23"><circle cx="3" cy="15" r="1.7" fill="#4cc04c"/><circle cx="3.5" cy="10.5" r="1.7" fill="#7ac07a"/><circle cx="6" cy="6.5" r="1.7" fill="#4aa0e0"/><circle cx="10" cy="4.5" r="1.7" fill="#8a6ad8"/><circle cx="14" cy="4.5" r="1.7" fill="#c060c0"/><circle cx="18" cy="6.5" r="1.7" fill="#e05090"/><circle cx="20.5" cy="10.5" r="1.7" fill="#d070c0"/><circle cx="21" cy="15" r="1.7" fill="#a080e0"/><text x="7" y="17" font-family="Liberation Serif" font-size="14" font-weight="bold" fill="#111">T</text><rect x="1" y="18" width="22" height="4.5" fill="#7a0606"/></svg>
<svg class="ic" style="left:403px;top:108px" width="7" height="4" viewBox="0 0 7 4"><path d="M0 0h7l-3.5 4z" fill="#111"/></svg>
<svg class="ic" style="left:415px;top:98px" width="24" height="23" viewBox="0 0 24 23"><circle cx="3" cy="15" r="1.7" fill="#4cc04c"/><circle cx="3.5" cy="10.5" r="1.7" fill="#7ac07a"/><circle cx="6" cy="6.5" r="1.7" fill="#4aa0e0"/><circle cx="10" cy="4.5" r="1.7" fill="#8a6ad8"/><circle cx="14" cy="4.5" r="1.7" fill="#c060c0"/><circle cx="18" cy="6.5" r="1.7" fill="#e05090"/><circle cx="20.5" cy="10.5" r="1.7" fill="#d070c0"/><circle cx="21" cy="15" r="1.7" fill="#a080e0"/><path d="M5 9l8-3 6 8-8 3z" fill="#f4d27a" stroke="#b08020" stroke-width=".6"/><path d="M5 9l4 6" stroke="#c0202a" stroke-width="3"/><rect x="1" y="18" width="22" height="4.5" fill="#f8ee10"/></svg>
<svg class="ic" style="left:445px;top:108px" width="7" height="4" viewBox="0 0 7 4"><path d="M0 0h7l-3.5 4z" fill="#111"/></svg>
<div style="position:absolute;left:458px;top:99px;width:1px;height:22px;background:#d5cec2;"></div>
<svg class="ic" style="left:467px;top:100px" width="19" height="21" viewBox="0 0 19 21"><path d="M2 3h14" stroke="#666" stroke-width="3" stroke-linecap="round"/><path d="M2 3h14" stroke="#e8e8e8" stroke-width="1" stroke-linecap="round"/><path d="M2 8h11" stroke="#666" stroke-width="3" stroke-linecap="round"/><path d="M2 8h11" stroke="#e8e8e8" stroke-width="1" stroke-linecap="round"/><path d="M2 13h8" stroke="#666" stroke-width="3" stroke-linecap="round"/><path d="M2 13h8" stroke="#e8e8e8" stroke-width="1" stroke-linecap="round"/><path d="M2 18h14" stroke="#666" stroke-width="3" stroke-linecap="round"/><path d="M2 18h14" stroke="#e8e8e8" stroke-width="1" stroke-linecap="round"/></svg>
<svg class="ic" style="left:500px;top:100px" width="19" height="21" viewBox="0 0 19 21"><path d="M2 3h14" stroke="#666" stroke-width="3" stroke-linecap="round"/><path d="M2 3h14" stroke="#e8e8e8" stroke-width="1" stroke-linecap="round"/><path d="M3.5 8h11" stroke="#666" stroke-width="3" stroke-linecap="round"/><path d="M3.5 8h11" stroke="#e8e8e8" stroke-width="1" stroke-linecap="round"/><path d="M5 13h8" stroke="#666" stroke-width="3" stroke-linecap="round"/><path d="M5 13h8" stroke="#e8e8e8" stroke-width="1" stroke-linecap="round"/><path d="M2 18h14" stroke="#666" stroke-width="3" stroke-linecap="round"/><path d="M2 18h14" stroke="#e8e8e8" stroke-width="1" stroke-linecap="round"/></svg>
<svg class="ic" style="left:532px;top:100px" width="19" height="21" viewBox="0 0 19 21"><path d="M2 3h14" stroke="#666" stroke-width="3" stroke-linecap="round"/><path d="M2 3h14" stroke="#e8e8e8" stroke-width="1" stroke-linecap="round"/><path d="M5 8h11" stroke="#666" stroke-width="3" stroke-linecap="round"/><path d="M5 8h11" stroke="#e8e8e8" stroke-width="1" stroke-linecap="round"/><path d="M8 13h8" stroke="#666" stroke-width="3" stroke-linecap="round"/><path d="M8 13h8" stroke="#e8e8e8" stroke-width="1" stroke-linecap="round"/><path d="M2 18h14" stroke="#666" stroke-width="3" stroke-linecap="round"/><path d="M2 18h14" stroke="#e8e8e8" stroke-width="1" stroke-linecap="round"/></svg>
<div style="position:absolute;left:559px;top:99px;width:1px;height:22px;background:#d5cec2;"></div>
<svg class="ic" style="left:568px;top:99px" width="24" height="23" viewBox="0 0 24 23"><path d="M2 3h17M2 8h13M2 13h5" stroke="#333" stroke-width="2.5" stroke-linecap="round"/><path d="M15 9h4q3 0 3 3v3q0 3-3 3h-7l3-3M12 18l3 3" fill="none" stroke="#f0a040" stroke-width="2"/></svg>
<svg class="ic" style="left:600px;top:99px" width="23" height="21" viewBox="0 0 23 21"><rect x="1.5" y="2.5" width="20" height="16" fill="none" stroke="#d8d0c4"/><path d="M2 7h19M2 14h19M7 3v16M17 3v16" stroke="#ddd6ca"/><path d="M5 10.5h13M5 10.5l2-2M5 10.5l2 2M18 10.5l-2-2M18 10.5l-2 2" stroke="#ccc5b8"/></svg>
<div style="position:absolute;left:632px;top:99px;width:1px;height:22px;background:#d5cec2;"></div>
<svg class="ic" style="left:640px;top:99px" width="24" height="24" viewBox="0 0 24 24"><rect x="1.5" y="1.5" width="20" height="19" fill="#f4f4f4" stroke="#aaa"/><path d="M3 4h14M3 8h12M3 12h14" stroke="#222" stroke-width="1.6"/><path d="M19 23v-9h-3l4-5 4 5h-3v9z" fill="#3cc03a" stroke="#208a20" stroke-width=".6"/></svg>
<svg class="ic" style="left:671px;top:99px" width="24" height="23" viewBox="0 0 24 23"><rect x="1.5" y="1.5" width="20" height="19" fill="#f4f4f4" stroke="#aaa"/><path d="M3 7h11M3 11h11M3 15h11" stroke="#222" stroke-width="1.6"/><path d="M19 2l-3.5 4h2v10h-2l3.5 4 3.5-4h-2V6h2z" fill="#3cc03a" stroke="#208a20" stroke-width=".6"/></svg>
<svg class="ic" style="left:702px;top:98px" width="24" height="24" viewBox="0 0 24 24"><rect x="1.5" y="1.5" width="20" height="19" fill="#f4f4f4" stroke="#aaa"/><path d="M3 10h14M3 14h14M3 18h14" stroke="#111" stroke-width="1.8"/><path d="M17 0v8h-3l4 5 4-5h-3V0z" fill="#3cc03a" stroke="#208a20" stroke-width=".6"/></svg>
<div style="position:absolute;left:732px;top:99px;width:1px;height:22px;background:#d5cec2;"></div>
<svg class="ic" style="left:741px;top:99px" width="23" height="23" viewBox="0 0 23 23"><rect x="1" y="1" width="21" height="21" rx="4" fill="#eef2f8" stroke="#8a9ab8" stroke-width="1.2"/><ellipse cx="13" cy="7" rx="5" ry="2.5" fill="#f5c02a" stroke="#c89010" stroke-width=".6"/><path d="M8 7v6h10V7" fill="#f0b020"/><ellipse cx="9" cy="14" rx="5" ry="2.5" fill="#f5c02a" stroke="#c89010" stroke-width=".6"/><path d="M4 14v4q5 3 10 0v-4" fill="#e8a818"/></svg>
<svg class="ic" style="left:773px;top:99px" width="22" height="22" viewBox="0 0 22 22"><rect x="1" y="1" width="20" height="20" rx="3.5" fill="#eef0f4" stroke="#8a8a96" stroke-width="1.2"/><text x="4" y="17" font-family="Liberation Sans" font-size="14" font-weight="bold" fill="#555">%</text></svg>
<svg class="ic" style="left:803px;top:99px" width="25" height="22" viewBox="0 0 25 22"><text x="0" y="17" font-family="Liberation Sans" font-size="16" font-weight="bold" fill="#2a2a2a">0.0</text></svg>
<svg class="ic" style="left:837px;top:98px" width="22" height="23" viewBox="0 0 22 23"><rect x="1" y="3" width="20" height="19" rx="1.5" fill="#fff" stroke="#888"/><rect x="1" y="3" width="20" height="5" fill="#4cb040"/><text x="4" y="18" font-family="Liberation Sans" font-size="10.5" font-weight="bold" fill="#333">14</text></svg>
<div style="position:absolute;left:866px;top:99px;width:1px;height:22px;background:#d5cec2;"></div>
<svg class="ic" style="left:875px;top:99px" width="24" height="23" viewBox="0 0 24 23"><text x="0" y="14" font-family="Liberation Sans" font-size="11" font-weight="bold" fill="#333">,00</text><text x="15" y="14" font-family="Liberation Sans" font-size="11" fill="#aaa">0</text><path d="M12 15v7M8.5 18.5h7" stroke="#3cc03a" stroke-width="2.2"/></svg>
<svg class="ic" style="left:906px;top:99px" width="22" height="22" viewBox="0 0 22 22"><text x="0" y="14" font-family="Liberation Sans" font-size="11" font-weight="bold" fill="#333">,0</text><text x="11" y="14" font-family="Liberation Sans" font-size="11" fill="#aaa">0</text><path d="M11 18h7" stroke="#d02020" stroke-width="2"/></svg>
<div style="position:absolute;left:936px;top:99px;width:1px;height:22px;background:#d5cec2;"></div>
<svg class="ic" style="left:944px;top:99px" width="24" height="22" viewBox="0 0 24 22"><path d="M9 3h13M11 8h11M11 13h11M11 18h11" stroke="#777" stroke-width="2.6" stroke-linecap="round"/><path d="M9 3h13M11 8h11M11 13h11M11 18h11" stroke="#eee" stroke-width="1" stroke-linecap="round"/><path d="M2 4v14l8-7z" fill="#3cc03a" stroke="#208a20" stroke-width=".6"/></svg>
<svg class="ic" style="left:976px;top:99px" width="24" height="22" viewBox="0 0 24 22"><path d="M8 3h9M2 8h7M2 13h7M2 18h7" stroke="#777" stroke-width="2.6" stroke-linecap="round"/><path d="M8 3h9M2 8h7M2 13h7M2 18h7" stroke="#eee" stroke-width="1" stroke-linecap="round"/><path d="M21 5v14l-9-7z" fill="#e02020" stroke="#901010" stroke-width=".6"/></svg>
<div style="position:absolute;left:1006px;top:99px;width:1px;height:22px;background:#d5cec2;"></div>
<svg class="ic" style="left:1014px;top:99px" width="23" height="23" viewBox="0 0 23 23"><rect x="1.2" y="1.5" width="20.5" height="19.5" fill="#efebe4" stroke="#2a2a2a" stroke-width="1.8"/><path d="M11.5 2v18.5M2 11h19" stroke="#333" stroke-width="1.5"/></svg>
<svg class="ic" style="left:1043px;top:108px" width="7" height="4" viewBox="0 0 7 4"><path d="M0 0h7l-3.5 4z" fill="#111"/></svg>
<svg class="ic" style="left:1056px;top:99px" width="24" height="23" viewBox="0 0 24 23"><path d="M2 3.5h20" stroke="#111" stroke-width="3" stroke-linecap="round" fill="none"/><path d="M2 9h20" stroke="#111" stroke-width="2.2" stroke-linecap="round"/><path d="M2 14.5h8.5M13 14.5h9" stroke="#111" stroke-width="1.9"/><path d="M2 20.5h5M9 20.5h5M16 20.5h6" stroke="#111" stroke-width="1.7"/></svg>
<svg class="ic" style="left:1085px;top:108px" width="7" height="4" viewBox="0 0 7 4"><path d="M0 0h7l-3.5 4z" fill="#111"/></svg>
<svg class="ic" style="left:1098px;top:97px" width="26" height="24" viewBox="0 0 26 24"><path d="M2 1h18" stroke="#3a5aa0" stroke-width="1.5"/><path d="M2.5 1v17" stroke="#3a5aa0" stroke-width="1.5"/><path d="M6 10l5-5 6 6-5 5z" fill="#fff" stroke="#111" stroke-width="1.2"/><path d="M9 7q-3-4 1-4" fill="none" stroke="#111"/><rect x="1" y="17" width="24" height="6" fill="#000090"/></svg>
<svg class="ic" style="left:1129px;top:108px" width="7" height="4" viewBox="0 0 7 4"><path d="M0 0h7l-3.5 4z" fill="#111"/></svg>
<div style="position:absolute;left:1142px;top:99px;width:1px;height:22px;background:#d5cec2;"></div>
<svg class="ic" style="left:1152px;top:99px" width="22" height="22" viewBox="0 0 22 22"><rect x="0.5" y="0.5" width="21" height="21" fill="#f4f4f4" stroke="#999"/><rect x="2.5" y="3.5" width="17" height="4" fill="#f4a0a0" stroke="#d03030"/><path d="M15 5.5h3" stroke="#222" stroke-width="1.3"/><rect x="2.5" y="9.5" width="17" height="4" fill="#e4e4e4" stroke="#999"/><path d="M15 11.5h3" stroke="#222" stroke-width="1.3"/><rect x="2.5" y="15.5" width="17" height="4" fill="#f4a0a0" stroke="#d03030"/><path d="M15 17.5h3" stroke="#222" stroke-width="1.3"/></svg>
<svg class="ic" style="left:1185px;top:99px" width="22" height="22" viewBox="0 0 22 22"><rect x="0.5" y="0.5" width="21" height="21" fill="#f4f4f4" stroke="#999"/><rect x="2.5" y="3.5" width="17" height="4" fill="#a8e090" stroke="#40a030"/><path d="M15 5.5h3" stroke="#222" stroke-width="1.3"/><rect x="2.5" y="9.5" width="17" height="4" fill="#f8c080" stroke="#e08020"/><path d="M15 11.5h3" stroke="#222" stroke-width="1.3"/><rect x="2.5" y="15.5" width="17" height="4" fill="#f4a0a0" stroke="#d03030"/><path d="M15 17.5h3" stroke="#222" stroke-width="1.3"/></svg>
<svg class="ic" style="left:1218px;top:99px" width="22" height="22" viewBox="0 0 22 22"><rect x="0.5" y="0.5" width="21" height="21" fill="#f4f4f4" stroke="#999"/><rect x="2.5" y="3.5" width="17" height="4" fill="#b8d4f4" stroke="#4a7ac0"/><path d="M15 5.5h3" stroke="#222" stroke-width="1.3"/><rect x="2.5" y="9.5" width="17" height="4" fill="#b8d4f4" stroke="#4a7ac0"/><path d="M15 11.5h3" stroke="#222" stroke-width="1.3"/><rect x="2.5" y="15.5" width="17" height="4" fill="#b8d4f4" stroke="#4a7ac0"/><path d="M15 17.5h3" stroke="#222" stroke-width="1.3"/></svg>
<svg class="ic" style="left:1251px;top:99px" width="22" height="22" viewBox="0 0 22 22"><rect x="0.5" y="0.5" width="21" height="21" fill="#f4f4f4" stroke="#999"/><path d="M2 6h18M2 12h18M2 18h18" stroke="#ddd" stroke-width="4"/><path d="M15 6h3M15 12h3M15 18h3" stroke="#222" stroke-width="1.3"/><path d="M5 3l3 3-3 3-3-3z" fill="#f5a020"/><path d="M5 9l3 3-3 3-3-3z" fill="#4cc040"/><path d="M5 15l3 3-3 3-3-3z" fill="#d02040"/></svg>
<div style="position:absolute;left:42px;top:136px;width:1878px;height:28px;background:#ebe4d8;"></div>
<div style="position:absolute;left:44px;top:137px;width:137px;height:21px;background:linear-gradient(180deg,#fbfaf7,#f1ede5);border:1px solid #9e978a;border-radius:3px;"></div><div style="position:absolute;left:160px;top:138px;width:1px;height:19px;background:#c9c2b5;"></div><svg class="ic" style="left:167px;top:144px" width="10" height="7" viewBox="0 0 10 7"><path d="M1 1.5l4 3.5 4-3.5" fill="none" stroke="#111" stroke-width="2"/></svg><div style="position:absolute;left:52px;top:142px;font-size:12.5px;line-height:1;color:#111;font-weight:normal;white-space:nowrap;letter-spacing:0.3px;">J4</div>
<div style="position:absolute;left:186px;top:137px;width:1px;height:22px;background:#d5cec2;"></div>
<svg class="ic" style="left:193px;top:137px" width="23" height="22" viewBox="0 0 23 22"><path d="M2 12l1.5-2 2 2 2-3 1 2" fill="none" stroke="#f8e040" stroke-width="0"/><circle cx="6" cy="5" r="3.2" fill="#fbee70" opacity=".9"/><circle cx="17" cy="6" r="3.5" fill="#fbe030"/><circle cx="11" cy="3" r="2" fill="#fdf4a0"/><text x="1" y="20" font-family="Liberation Serif" font-size="14" font-style="italic" font-weight="bold" fill="#111">f<tspan font-size="10">(x)</tspan></text><path d="M17 7l4 14" stroke="#8a7ab0" stroke-width="1.2"/></svg>
<svg class="ic" style="left:226px;top:137px" width="18" height="22" viewBox="0 0 18 22"><path d="M2 2h14l1 4h-2l-1-2H6l6 7-7 8h9l2-3h2l-1 5H1v-2l7-8-6-7z" fill="#444" stroke="#111" stroke-width=".8"/></svg>
<svg class="ic" style="left:255px;top:139px" width="22" height="16" viewBox="0 0 22 16"><path d="M2 3.5q9-1.5 18-1" stroke="#111" stroke-width="4" stroke-linecap="round"/><path d="M2 13q9-1.5 18-1" stroke="#111" stroke-width="4" stroke-linecap="round"/></svg>
<div style="position:absolute;left:285px;top:138px;width:1px;height:20px;background:#d5cec2;"></div>
<div style="position:absolute;left:290px;top:136px;width:1597px;height:23px;background:#fdfcfa;border-radius:2px;"></div>
<div style="position:absolute;left:1892px;top:137px;width:15px;height:21px;background:linear-gradient(180deg,#fbfaf7,#ece7de);border:1px solid #9e978a;border-radius:3px;"></div>
<svg class="ic" style="left:1895px;top:145px" width="9" height="5" viewBox="0 0 9 5"><path d="M0 0h9l-4.5 5z" fill="#111"/></svg>
<div style="position:absolute;left:76px;top:183px;width:1821px;height:842px;background:#fff;"></div>
<svg class="ic" style="left:0px;top:0px" width="1920" height="1080" viewBox="0 0 1920 1080"><path d="M169.5 183V1025" stroke="#c4c4c4"/><path d="M253.5 183V1025" stroke="#c4c4c4"/><path d="M337.5 183V1025" stroke="#c4c4c4"/><path d="M421.5 183V1025" stroke="#c4c4c4"/><path d="M505.5 183V1025" stroke="#c4c4c4"/><path d="M589.5 183V1025" stroke="#c4c4c4"/><path d="M673.5 183V1025" stroke="#c4c4c4"/><path d="M757.5 183V1025" stroke="#c4c4c4"/><path d="M839.5 183V1025" stroke="#c4c4c4"/><path d="M921.5 183V1025" stroke="#c4c4c4"/><path d="M1003.5 183V1025" stroke="#c4c4c4"/><path d="M1085.5 183V1025" stroke="#c4c4c4"/><path d="M1167.5 183V1025" stroke="#c4c4c4"/><path d="M1249.5 183V1025" stroke="#c4c4c4"/><path d="M1331.5 183V1025" stroke="#c4c4c4"/><path d="M1413.5 183V1025" stroke="#c4c4c4"/><path d="M1495.5 183V1025" stroke="#c4c4c4"/><path d="M1577.5 183V1025" stroke="#c4c4c4"/><path d="M1659.5 183V1025" stroke="#c4c4c4"/><path d="M1741.5 183V1025" stroke="#c4c4c4"/><path d="M1823.5 183V1025" stroke="#c4c4c4"/><path d="M76 204.5H1897" stroke="#c4c4c4"/><path d="M76 226.5H1897" stroke="#c4c4c4"/><path d="M76 243.5H1897" stroke="#c4c4c4"/><path d="M76 260.5H1897" stroke="#c4c4c4"/><path d="M76 277.5H1897" stroke="#c4c4c4"/><path d="M76 294.5H1897" stroke="#c4c4c4"/><path d="M76 311.5H1897" stroke="#c4c4c4"/><path d="M76 328.5H1897" stroke="#c4c4c4"/><path d="M76 345.5H1897" stroke="#c4c4c4"/><path d="M76 362.5H1897" stroke="#c4c4c4"/><path d="M76 379.5H1897" stroke="#c4c4c4"/><path d="M76 396.5H1897" stroke="#c4c4c4"/><path d="M76 413.5H1897" stroke="#c4c4c4"/><path d="M76 430.5H1897" stroke="#c4c4c4"/><path d="M76 447.5H1897" stroke="#c4c4c4"/><path d="M76 464.5H1897" stroke="#c4c4c4"/><path d="M76 481.5H1897" stroke="#c4c4c4"/><path d="M76 498.5H1897" stroke="#c4c4c4"/><path d="M76 515.5H1897" stroke="#c4c4c4"/><path d="M76 532.5H1897" stroke="#c4c4c4"/><path d="M76 549.5H1897" stroke="#c4c4c4"/><path d="M76 566.5H1897" stroke="#c4c4c4"/><path d="M76 583.5H1897" stroke="#c4c4c4"/><path d="M76 600.5H1897" stroke="#c4c4c4"/><path d="M76 617.5H1897" stroke="#c4c4c4"/><path d="M76 634.5H1897" stroke="#c4c4c4"/><path d="M76 651.5H1897" stroke="#c4c4c4"/><path d="M76 668.5H1897" stroke="#c4c4c4"/><path d="M76 685.5H1897" stroke="#c4c4c4"/><path d="M76 702.5H1897" stroke="#c4c4c4"/><path d="M76 719.5H1897" stroke="#c4c4c4"/><path d="M76 736.5H1897" stroke="#c4c4c4"/><path d="M76 753.5H1897" stroke="#c4c4c4"/><path d="M76 770.5H1897" stroke="#c4c4c4"/><path d="M76 787.5H1897" stroke="#c4c4c4"/><path d="M76 804.5H1897" stroke="#c4c4c4"/><path d="M76 821.5H1897" stroke="#c4c4c4"/><path d="M76 838.5H1897" stroke="#c4c4c4"/><path d="M76 855.5H1897" stroke="#c4c4c4"/><path d="M76 872.5H1897" stroke="#c4c4c4"/><path d="M76 889.5H1897" stroke="#c4c4c4"/><path d="M76 906.5H1897" stroke="#c4c4c4"/><path d="M76 923.5H1897" stroke="#c4c4c4"/><path d="M76 940.5H1897" stroke="#c4c4c4"/><path d="M76 957.5H1897" stroke="#c4c4c4"/><path d="M76 974.5H1897" stroke="#c4c4c4"/><path d="M76 991.5H1897" stroke="#c4c4c4"/><path d="M76 1008.5H1897" stroke="#c4c4c4"/></svg>
<div style="position:absolute;left:43px;top:164px;width:1854px;height:19px;background:linear-gradient(180deg,#f5f1e9 0%,#efe9de 55%,#e6dece 100%);border-top:1px solid #b8b0a0;border-bottom:1px solid #8f8776;"></div>
<div style="position:absolute;left:43px;top:183px;width:33px;height:842px;background:linear-gradient(90deg,#f2ede4 0%,#ebe4d6 60%,#e4dccb 100%);border-right:1px solid #8f8776;"></div>
<svg class="ic" style="left:0px;top:0px" width="1920" height="1080" viewBox="0 0 1920 1080"><path d="M75.5 165V182" stroke="#a39b8a"/><path d="M169.5 165V182" stroke="#a39b8a"/><path d="M253.5 165V182" stroke="#a39b8a"/><path d="M337.5 165V182" stroke="#a39b8a"/><path d="M421.5 165V182" stroke="#a39b8a"/><path d="M505.5 165V182" stroke="#a39b8a"/><path d="M589.5 165V182" stroke="#a39b8a"/><path d="M673.5 165V182" stroke="#a39b8a"/><path d="M757.5 165V182" stroke="#a39b8a"/><path d="M839.5 165V182" stroke="#a39b8a"/><path d="M921.5 165V182" stroke="#a39b8a"/><path d="M1003.5 165V182" stroke="#a39b8a"/><path d="M1085.5 165V182" stroke="#a39b8a"/><path d="M1167.5 165V182" stroke="#a39b8a"/><path d="M1249.5 165V182" stroke="#a39b8a"/><path d="M1331.5 165V182" stroke="#a39b8a"/><path d="M1413.5 165V182" stroke="#a39b8a"/><path d="M1495.5 165V182" stroke="#a39b8a"/><path d="M1577.5 165V182" stroke="#a39b8a"/><path d="M1659.5 165V182" stroke="#a39b8a"/><path d="M1741.5 165V182" stroke="#a39b8a"/><path d="M1823.5 165V182" stroke="#a39b8a"/><path d="M43 204.5H75" stroke="#a39b8a"/><path d="M43 226.5H75" stroke="#a39b8a"/><path d="M43 243.5H75" stroke="#a39b8a"/><path d="M43 260.5H75" stroke="#a39b8a"/><path d="M43 277.5H75" stroke="#a39b8a"/><path d="M43 294.5H75" stroke="#a39b8a"/><path d="M43 311.5H75" stroke="#a39b8a"/><path d="M43 328.5H75" stroke="#a39b8a"/><path d="M43 345.5H75" stroke="#a39b8a"/><path d="M43 362.5H75" stroke="#a39b8a"/><path d="M43 379.5H75" stroke="#a39b8a"/><path d="M43 396.5H75" stroke="#a39b8a"/><path d="M43 413.5H75" stroke="#a39b8a"/><path d="M43 430.5H75" stroke="#a39b8a"/><path d="M43 447.5H75" stroke="#a39b8a"/><path d="M43 464.5H75" stroke="#a39b8a"/><path d="M43 481.5H75" stroke="#a39b8a"/><path d="M43 498.5H75" stroke="#a39b8a"/><path d="M43 515.5H75" stroke="#a39b8a"/><path d="M43 532.5H75" stroke="#a39b8a"/><path d="M43 549.5H75" stroke="#a39b8a"/><path d="M43 566.5H75" stroke="#a39b8a"/><path d="M43 583.5H75" stroke="#a39b8a"/><path d="M43 600.5H75" stroke="#a39b8a"/><path d="M43 617.5H75" stroke="#a39b8a"/><path d="M43 634.5H75" stroke="#a39b8a"/><path d="M43 651.5H75" stroke="#a39b8a"/><path d="M43 668.5H75" stroke="#a39b8a"/><path d="M43 685.5H75" stroke="#a39b8a"/><path d="M43 702.5H75" stroke="#a39b8a"/><path d="M43 719.5H75" stroke="#a39b8a"/><path d="M43 736.5H75" stroke="#a39b8a"/><path d="M43 753.5H75" stroke="#a39b8a"/><path d="M43 770.5H75" stroke="#a39b8a"/><path d="M43 787.5H75" stroke="#a39b8a"/><path d="M43 804.5H75" stroke="#a39b8a"/><path d="M43 821.5H75" stroke="#a39b8a"/><path d="M43 838.5H75" stroke="#a39b8a"/><path d="M43 855.5H75" stroke="#a39b8a"/><path d="M43 872.5H75" stroke="#a39b8a"/><path d="M43 889.5H75" stroke="#a39b8a"/><path d="M43 906.5H75" stroke="#a39b8a"/><path d="M43 923.5H75" stroke="#a39b8a"/><path d="M43 940.5H75" stroke="#a39b8a"/><path d="M43 957.5H75" stroke="#a39b8a"/><path d="M43 974.5H75" stroke="#a39b8a"/><path d="M43 991.5H75" stroke="#a39b8a"/><path d="M43 1008.5H75" stroke="#a39b8a"/></svg>
<div style="position:absolute;left:840px;top:165px;width:81px;height:17px;background:linear-gradient(180deg,#6aa6e6 0%,#3f8ad8 50%,#2f78c8 100%);"></div>
<div style="position:absolute;left:43px;top:244px;width:32px;height:16px;background:linear-gradient(90deg,#6ea9e6 0%,#3b86d6 60%,#2f7acb 100%);"></div>
<div style="position:absolute;left:76.5px;top:167px;width:94px;text-align:center;font-size:12.5px;line-height:14px;color:#222;letter-spacing:0.3px;">A</div>
<div style="position:absolute;left:170.5px;top:167px;width:84px;text-align:center;font-size:12.5px;line-height:14px;color:#222;letter-spacing:0.3px;">B</div>
<div style="position:absolute;left:254.5px;top:167px;width:84px;text-align:center;font-size:12.5px;line-height:14px;color:#222;letter-spacing:0.3px;">C</div>
<div style="position:absolute;left:338.5px;top:167px;width:84px;text-align:center;font-size:12.5px;line-height:14px;color:#222;letter-spacing:0.3px;">D</div>
<div style="position:absolute;left:422.5px;top:167px;width:84px;text-align:center;font-size:12.5px;line-height:14px;color:#222;letter-spacing:0.3px;">E</div>
<div style="position:absolute;left:506.5px;top:167px;width:84px;text-align:center;font-size:12.5px;line-height:14px;color:#222;letter-spacing:0.3px;">F</div>
<div style="position:absolute;left:590.5px;top:167px;width:84px;text-align:center;font-size:12.5px;line-height:14px;color:#222;letter-spacing:0.3px;">G</div>
<div style="position:absolute;left:674.5px;top:167px;width:84px;text-align:center;font-size:12.5px;line-height:14px;color:#222;letter-spacing:0.3px;">H</div>
<div style="position:absolute;left:758.5px;top:167px;width:82px;text-align:center;font-size:12.5px;line-height:14px;color:#222;letter-spacing:0.3px;">I</div>
<div style="position:absolute;left:840.5px;top:167px;width:82px;text-align:center;font-size:12.5px;line-height:14px;color:#fff;letter-spacing:0.3px;">J</div>
<div style="position:absolute;left:922.5px;top:167px;width:82px;text-align:center;font-size:12.5px;line-height:14px;color:#222;letter-spacing:0.3px;">K</div>
<div style="position:absolute;left:1004.5px;top:167px;width:82px;text-align:center;font-size:12.5px;line-height:14px;color:#222;letter-spacing:0.3px;">L</div>
<div style="position:absolute;left:1086.5px;top:167px;width:82px;text-align:center;font-size:12.5px;line-height:14px;color:#222;letter-spacing:0.3px;">M</div>
<div style="position:absolute;left:1168.5px;top:167px;width:82px;text-align:center;font-size:12.5px;line-height:14px;color:#222;letter-spacing:0.3px;">N</div>
<div style="position:absolute;left:1250.5px;top:167px;width:82px;text-align:center;font-size:12.5px;line-height:14px;color:#222;letter-spacing:0.3px;">O</div>
<div style="position:absolute;left:1332.5px;top:167px;width:82px;text-align:center;font-size:12.5px;line-height:14px;color:#222;letter-spacing:0.3px;">P</div>
<div style="position:absolute;left:1414.5px;top:167px;width:82px;text-align:center;font-size:12.5px;line-height:14px;color:#222;letter-spacing:0.3px;">Q</div>
<div style="position:absolute;left:1496.5px;top:167px;width:82px;text-align:center;font-size:12.5px;line-height:14px;color:#222;letter-spacing:0.3px;">R</div>
<div style="position:absolute;left:1578.5px;top:167px;width:82px;text-align:center;font-size:12.5px;line-height:14px;color:#222;letter-spacing:0.3px;">S</div>
<div style="position:absolute;left:1660.5px;top:167px;width:82px;text-align:center;font-size:12.5px;line-height:14px;color:#222;letter-spacing:0.3px;">T</div>
<div style="position:absolute;left:1742.5px;top:167px;width:82px;text-align:center;font-size:12.5px;line-height:14px;color:#222;letter-spacing:0.3px;">U</div>
<div style="position:absolute;left:1824.5px;top:167px;width:82px;text-align:center;font-size:12.5px;line-height:14px;color:#222;letter-spacing:0.3px;">V</div>
<div style="position:absolute;left:43px;top:184px;width:32px;height:22px;text-align:center;font-size:12.5px;line-height:22px;color:#222;font-weight:normal;letter-spacing:0.2px;">1</div>
<div style="position:absolute;left:43px;top:206px;width:32px;height:22px;text-align:center;font-size:12.5px;line-height:22px;color:#222;font-weight:normal;letter-spacing:0.2px;">2</div>
<div style="position:absolute;left:43px;top:228px;width:32px;height:17px;text-align:center;font-size:12.5px;line-height:17px;color:#222;font-weight:normal;letter-spacing:0.2px;">3</div>
<div style="position:absolute;left:43px;top:245px;width:32px;height:17px;text-align:center;font-size:12.5px;line-height:17px;color:#fff;font-weight:bold;letter-spacing:0.2px;">4</div>
<div style="position:absolute;left:43px;top:262px;width:32px;height:17px;text-align:center;font-size:12.5px;line-height:17px;color:#222;font-weight:normal;letter-spacing:0.2px;">5</div>
<div style="position:absolute;left:43px;top:279px;width:32px;height:17px;text-align:center;font-size:12.5px;line-height:17px;color:#222;font-weight:normal;letter-spacing:0.2px;">6</div>
<div style="position:absolute;left:43px;top:296px;width:32px;height:17px;text-align:center;font-size:12.5px;line-height:17px;color:#222;font-weight:normal;letter-spacing:0.2px;">7</div>
<div style="position:absolute;left:43px;top:313px;width:32px;height:17px;text-align:center;font-size:12.5px;line-height:17px;color:#222;font-weight:normal;letter-spacing:0.2px;">8</div>
<div style="position:absolute;left:43px;top:330px;width:32px;height:17px;text-align:center;font-size:12.5px;line-height:17px;color:#222;font-weight:normal;letter-spacing:0.2px;">9</div>
<div style="position:absolute;left:43px;top:347px;width:32px;height:17px;text-align:center;font-size:12.5px;line-height:17px;color:#222;font-weight:normal;letter-spacing:0.2px;">10</div>
<div style="position:absolute;left:43px;top:364px;width:32px;height:17px;text-align:center;font-size:12.5px;line-height:17px;color:#222;font-weight:normal;letter-spacing:0.2px;">11</div>
<div style="position:absolute;left:43px;top:381px;width:32px;height:17px;text-align:center;font-size:12.5px;line-height:17px;color:#222;font-weight:normal;letter-spacing:0.2px;">12</div>
<div style="position:absolute;left:43px;top:398px;width:32px;height:17px;text-align:center;font-size:12.5px;line-height:17px;color:#222;font-weight:normal;letter-spacing:0.2px;">13</div>
<div style="position:absolute;left:43px;top:415px;width:32px;height:17px;text-align:center;font-size:12.5px;line-height:17px;color:#222;font-weight:normal;letter-spacing:0.2px;">14</div>
<div style="position:absolute;left:43px;top:432px;width:32px;height:17px;text-align:center;font-size:12.5px;line-height:17px;color:#222;font-weight:normal;letter-spacing:0.2px;">15</div>
<div style="position:absolute;left:43px;top:449px;width:32px;height:17px;text-align:center;font-size:12.5px;line-height:17px;color:#222;font-weight:normal;letter-spacing:0.2px;">16</div>
<div style="position:absolute;left:43px;top:466px;width:32px;height:17px;text-align:center;font-size:12.5px;line-height:17px;color:#222;font-weight:normal;letter-spacing:0.2px;">17</div>
<div style="position:absolute;left:43px;top:483px;width:32px;height:17px;text-align:center;font-size:12.5px;line-height:17px;color:#222;font-weight:normal;letter-spacing:0.2px;">18</div>
<div style="position:absolute;left:43px;top:500px;width:32px;height:17px;text-align:center;font-size:12.5px;line-height:17px;color:#222;font-weight:normal;letter-spacing:0.2px;">19</div>
<div style="position:absolute;left:43px;top:517px;width:32px;height:17px;text-align:center;font-size:12.5px;line-height:17px;color:#222;font-weight:normal;letter-spacing:0.2px;">20</div>
<div style="position:absolute;left:43px;top:534px;width:32px;height:17px;text-align:center;font-size:12.5px;line-height:17px;color:#222;font-weight:normal;letter-spacing:0.2px;">21</div>
<div style="position:absolute;left:43px;top:551px;width:32px;height:17px;text-align:center;font-size:12.5px;line-height:17px;color:#222;font-weight:normal;letter-spacing:0.2px;">22</div>
<div style="position:absolute;left:43px;top:568px;width:32px;height:17px;text-align:center;font-size:12.5px;line-height:17px;color:#222;font-weight:normal;letter-spacing:0.2px;">23</div>
<div style="position:absolute;left:43px;top:585px;width:32px;height:17px;text-align:center;font-size:12.5px;line-height:17px;color:#222;font-weight:normal;letter-spacing:0.2px;">24</div>
<div style="position:absolute;left:43px;top:602px;width:32px;height:17px;text-align:center;font-size:12.5px;line-height:17px;color:#222;font-weight:normal;letter-spacing:0.2px;">25</div>
<div style="position:absolute;left:43px;top:619px;width:32px;height:17px;text-align:center;font-size:12.5px;line-height:17px;color:#222;font-weight:normal;letter-spacing:0.2px;">26</div>
<div style="position:absolute;left:43px;top:636px;width:32px;height:17px;text-align:center;font-size:12.5px;line-height:17px;color:#222;font-weight:normal;letter-spacing:0.2px;">27</div>
<div style="position:absolute;left:43px;top:653px;width:32px;height:17px;text-align:center;font-size:12.5px;line-height:17px;color:#222;font-weight:normal;letter-spacing:0.2px;">28</div>
<div style="position:absolute;left:43px;top:670px;width:32px;height:17px;text-align:center;font-size:12.5px;line-height:17px;color:#222;font-weight:normal;letter-spacing:0.2px;">29</div>
<div style="position:absolute;left:43px;top:687px;width:32px;height:17px;text-align:center;font-size:12.5px;line-height:17px;color:#222;font-weight:normal;letter-spacing:0.2px;">30</div>
<div style="position:absolute;left:43px;top:704px;width:32px;height:17px;text-align:center;font-size:12.5px;line-height:17px;color:#222;font-weight:normal;letter-spacing:0.2px;">31</div>
<div style="position:absolute;left:43px;top:721px;width:32px;height:17px;text-align:center;font-size:12.5px;line-height:17px;color:#222;font-weight:normal;letter-spacing:0.2px;">32</div>
<div style="position:absolute;left:43px;top:738px;width:32px;height:17px;text-align:center;font-size:12.5px;line-height:17px;color:#222;font-weight:normal;letter-spacing:0.2px;">33</div>
<div style="position:absolute;left:43px;top:755px;width:32px;height:17px;text-align:center;font-size:12.5px;line-height:17px;color:#222;font-weight:normal;letter-spacing:0.2px;">34</div>
<div style="position:absolute;left:43px;top:772px;width:32px;height:17px;text-align:center;font-size:12.5px;line-height:17px;color:#222;font-weight:normal;letter-spacing:0.2px;">35</div>
<div style="position:absolute;left:43px;top:789px;width:32px;height:17px;text-align:center;font-size:12.5px;line-height:17px;color:#222;font-weight:normal;letter-spacing:0.2px;">36</div>
<div style="position:absolute;left:43px;top:806px;width:32px;height:17px;text-align:center;font-size:12.5px;line-height:17px;color:#222;font-weight:normal;letter-spacing:0.2px;">37</div>
<div style="position:absolute;left:43px;top:823px;width:32px;height:17px;text-align:center;font-size:12.5px;line-height:17px;color:#222;font-weight:normal;letter-spacing:0.2px;">38</div>
<div style="position:absolute;left:43px;top:840px;width:32px;height:17px;text-align:center;font-size:12.5px;line-height:17px;color:#222;font-weight:normal;letter-spacing:0.2px;">39</div>
<div style="position:absolute;left:43px;top:857px;width:32px;height:17px;text-align:center;font-size:12.5px;line-height:17px;color:#222;font-weight:normal;letter-spacing:0.2px;">40</div>
<div style="position:absolute;left:43px;top:874px;width:32px;height:17px;text-align:center;font-size:12.5px;line-height:17px;color:#222;font-weight:normal;letter-spacing:0.2px;">41</div>
<div style="position:absolute;left:43px;top:891px;width:32px;height:17px;text-align:center;font-size:12.5px;line-height:17px;color:#222;font-weight:normal;letter-spacing:0.2px;">42</div>
<div style="position:absolute;left:43px;top:908px;width:32px;height:17px;text-align:center;font-size:12.5px;line-height:17px;color:#222;font-weight:normal;letter-spacing:0.2px;">43</div>
<div style="position:absolute;left:43px;top:925px;width:32px;height:17px;text-align:center;font-size:12.5px;line-height:17px;color:#222;font-weight:normal;letter-spacing:0.2px;">44</div>
<div style="position:absolute;left:43px;top:942px;width:32px;height:17px;text-align:center;font-size:12.5px;line-height:17px;color:#222;font-weight:normal;letter-spacing:0.2px;">45</div>
<div style="position:absolute;left:43px;top:959px;width:32px;height:17px;text-align:center;font-size:12.5px;line-height:17px;color:#222;font-weight:normal;letter-spacing:0.2px;">46</div>
<div style="position:absolute;left:43px;top:976px;width:32px;height:17px;text-align:center;font-size:12.5px;line-height:17px;color:#222;font-weight:normal;letter-spacing:0.2px;">47</div>
<div style="position:absolute;left:43px;top:993px;width:32px;height:17px;text-align:center;font-size:12.5px;line-height:17px;color:#222;font-weight:normal;letter-spacing:0.2px;">48</div>
<div style="position:absolute;left:43px;top:1010px;width:32px;height:17px;text-align:center;font-size:12.5px;line-height:17px;color:#222;font-weight:normal;letter-spacing:0.2px;">49</div>
<div style="position:absolute;left:76px;top:183px;width:763px;height:21px;background:#00003c;"></div>
<div style="position:absolute;left:169px;top:183px;width:1px;height:21px;background:#d8d8e8;"></div>
<div style="position:absolute;left:253px;top:183px;width:1px;height:21px;background:#d8d8e8;"></div>
<div style="position:absolute;left:337px;top:183px;width:1px;height:21px;background:#d8d8e8;"></div>
<div style="position:absolute;left:421px;top:183px;width:1px;height:21px;background:#d8d8e8;"></div>
<div style="position:absolute;left:505px;top:183px;width:1px;height:21px;background:#d8d8e8;"></div>
<div style="position:absolute;left:589px;top:183px;width:1px;height:21px;background:#d8d8e8;"></div>
<div style="position:absolute;left:673px;top:183px;width:1px;height:21px;background:#d8d8e8;"></div>
<div style="position:absolute;left:76px;top:183px;width:93px;height:22px;text-align:center;font-size:13px;line-height:21px;color:#fff;font-weight:bold;white-space:nowrap;overflow:visible;">Année</div>
<div style="position:absolute;left:170px;top:183px;width:83px;height:22px;text-align:center;font-size:13px;line-height:21px;color:#fff;font-weight:bold;white-space:nowrap;overflow:visible;">2009 – 2010</div>
<div style="position:absolute;left:254px;top:183px;width:83px;height:22px;text-align:center;font-size:13px;line-height:21px;color:#fff;font-weight:bold;white-space:nowrap;overflow:visible;">2010 – 2011</div>
<div style="position:absolute;left:338px;top:183px;width:83px;height:22px;text-align:center;font-size:13px;line-height:21px;color:#fff;font-weight:bold;white-space:nowrap;overflow:visible;">2011 – 2012</div>
<div style="position:absolute;left:422px;top:183px;width:83px;height:22px;text-align:center;font-size:13px;line-height:21px;color:#fff;font-weight:bold;white-space:nowrap;overflow:visible;">2012 – 2013</div>
<div style="position:absolute;left:506px;top:183px;width:83px;height:22px;text-align:center;font-size:13px;line-height:21px;color:#fff;font-weight:bold;white-space:nowrap;overflow:visible;">2013 – 2014</div>
<div style="position:absolute;left:590px;top:183px;width:83px;height:22px;text-align:center;font-size:13px;line-height:21px;color:#fff;font-weight:bold;white-space:nowrap;overflow:visible;">2014 – 2015</div>
<div style="position:absolute;left:674px;top:183px;width:83px;height:22px;text-align:center;font-size:13px;line-height:21px;color:#fff;font-weight:bold;white-space:nowrap;overflow:visible;">2015 – 2016</div>
<div style="position:absolute;left:758px;top:183px;width:81px;height:22px;text-align:center;font-size:13px;line-height:21px;color:#fff;font-weight:bold;white-space:nowrap;overflow:visible;">2016 -2017</div>
<div style="position:absolute;left:76px;top:205px;width:93px;height:22px;text-align:center;font-size:13px;line-height:21px;color:#000;font-weight:normal;white-space:nowrap;overflow:visible;">Tarifs estimés</div>
<div style="position:absolute;left:170px;top:205px;width:83px;height:22px;text-align:center;font-size:13px;line-height:21px;color:#000;font-weight:normal;white-space:nowrap;overflow:visible;">1 407,52 €</div>
<div style="position:absolute;left:254px;top:205px;width:83px;height:22px;text-align:center;font-size:13px;line-height:21px;color:#000;font-weight:normal;white-space:nowrap;overflow:visible;">#VALEUR !</div>
<div style="position:absolute;left:338px;top:205px;width:83px;height:22px;text-align:center;font-size:13px;line-height:21px;color:#000;font-weight:normal;white-space:nowrap;overflow:visible;">#VALEUR !</div>
<div style="position:absolute;left:422px;top:205px;width:83px;height:22px;text-align:center;font-size:13px;line-height:21px;color:#000;font-weight:normal;white-space:nowrap;overflow:visible;">#VALEUR !</div>
<div style="position:absolute;left:506px;top:205px;width:83px;height:22px;text-align:center;font-size:13px;line-height:21px;color:#000;font-weight:normal;white-space:nowrap;overflow:visible;">#VALEUR !</div>
<div style="position:absolute;left:590px;top:205px;width:83px;height:22px;text-align:center;font-size:13px;line-height:21px;color:#000;font-weight:normal;white-space:nowrap;overflow:visible;">#VALEUR !</div>
<div style="position:absolute;left:674px;top:205px;width:83px;height:22px;text-align:center;font-size:13px;line-height:21px;color:#000;font-weight:normal;white-space:nowrap;overflow:visible;">#VALEUR !</div>
<div style="position:absolute;left:758px;top:205px;width:81px;height:22px;text-align:center;font-size:13px;line-height:21px;color:#000;font-weight:normal;white-space:nowrap;overflow:visible;">314,72 €</div>
<div style="position:absolute;left:77px;top:227px;width:92px;height:17px;text-align:left;font-size:13px;line-height:16px;color:#000;font-weight:normal;white-space:nowrap;overflow:visible;">KWh compteur</div>
<div style="position:absolute;left:170px;top:227px;width:83px;height:17px;text-align:center;font-size:13px;line-height:16px;color:#000;font-weight:normal;white-space:nowrap;overflow:visible;">11 619</div>
<div style="position:absolute;left:254px;top:227px;width:83px;height:17px;text-align:center;font-size:13px;line-height:16px;color:#000;font-weight:normal;white-space:nowrap;overflow:visible;">11 271</div>
<div style="position:absolute;left:338px;top:227px;width:83px;height:17px;text-align:center;font-size:13px;line-height:16px;color:#000;font-weight:normal;white-space:nowrap;overflow:visible;">10 263</div>
<div style="position:absolute;left:422px;top:227px;width:83px;height:17px;text-align:center;font-size:13px;line-height:16px;color:#000;font-weight:normal;white-space:nowrap;overflow:visible;">10 769</div>
<div style="position:absolute;left:506px;top:227px;width:83px;height:17px;text-align:center;font-size:13px;line-height:16px;color:#000;font-weight:normal;white-space:nowrap;overflow:visible;">9 580</div>
<div style="position:absolute;left:590px;top:227px;width:83px;height:17px;text-align:center;font-size:13px;line-height:16px;color:#000;font-weight:normal;white-space:nowrap;overflow:visible;">11 332</div>
<div style="position:absolute;left:674px;top:227px;width:83px;height:17px;text-align:center;font-size:13px;line-height:16px;color:#000;font-weight:normal;white-space:nowrap;overflow:visible;">9 721</div>
<div style="position:absolute;left:758px;top:227px;width:81px;height:17px;text-align:center;font-size:13px;line-height:16px;color:#000;font-weight:normal;white-space:nowrap;overflow:visible;">1 872</div>
<div style="position:absolute;left:77px;top:244px;width:92px;height:17px;text-align:left;font-size:13px;line-height:16px;color:#000;font-weight:normal;white-space:nowrap;overflow:visible;">KWh facture</div>
<div style="position:absolute;left:170px;top:244px;width:83px;height:17px;text-align:center;font-size:13px;line-height:16px;color:#000;font-weight:normal;white-space:nowrap;overflow:visible;">11 618</div>
<div style="position:absolute;left:254px;top:244px;width:83px;height:17px;text-align:center;font-size:13px;line-height:16px;color:#000;font-weight:normal;white-space:nowrap;overflow:visible;">11 234</div>
<div style="position:absolute;left:338px;top:244px;width:83px;height:17px;text-align:center;font-size:13px;line-height:16px;color:#000;font-weight:normal;white-space:nowrap;overflow:visible;">10 253</div>
<div style="position:absolute;left:422px;top:244px;width:83px;height:17px;text-align:center;font-size:13px;line-height:16px;color:#000;font-weight:normal;white-space:nowrap;overflow:visible;">10 740</div>
<div style="position:absolute;left:506px;top:244px;width:83px;height:17px;text-align:center;font-size:13px;line-height:16px;color:#000;font-weight:normal;white-space:nowrap;overflow:visible;">9 507</div>
<div style="position:absolute;left:590px;top:244px;width:83px;height:17px;text-align:center;font-size:13px;line-height:16px;color:#000;font-weight:normal;white-space:nowrap;overflow:visible;">11 303</div>
<div style="position:absolute;left:674px;top:244px;width:83px;height:17px;text-align:center;font-size:13px;line-height:16px;color:#000;font-weight:normal;white-space:nowrap;overflow:visible;">9 679</div>
<div style="position:absolute;left:758px;top:244px;width:81px;height:17px;text-align:center;font-size:13px;line-height:16px;color:#000;font-weight:normal;white-space:nowrap;overflow:visible;">?</div>
<div style="position:absolute;left:77px;top:261px;width:92px;height:17px;text-align:left;font-size:13px;line-height:16px;color:#000;font-weight:normal;white-space:nowrap;overflow:visible;">Tarifs factures</div>
<div style="position:absolute;left:170px;top:261px;width:83px;height:17px;text-align:center;font-size:13px;line-height:16px;color:#000;font-weight:normal;white-space:nowrap;overflow:visible;">1 494,93 €</div>
<div style="position:absolute;left:254px;top:261px;width:83px;height:17px;text-align:center;font-size:13px;line-height:16px;color:#000;font-weight:normal;white-space:nowrap;overflow:visible;">1 414,59 €</div>
<div style="position:absolute;left:338px;top:261px;width:83px;height:17px;text-align:center;font-size:13px;line-height:16px;color:#000;font-weight:normal;white-space:nowrap;overflow:visible;">1 349,55 €</div>
<div style="position:absolute;left:422px;top:261px;width:83px;height:17px;text-align:center;font-size:13px;line-height:16px;color:#000;font-weight:normal;white-space:nowrap;overflow:visible;">1 454,90 €</div>
<div style="position:absolute;left:506px;top:261px;width:83px;height:17px;text-align:center;font-size:13px;line-height:16px;color:#000;font-weight:normal;white-space:nowrap;overflow:visible;">1 421,43 €</div>
<div style="position:absolute;left:590px;top:261px;width:83px;height:17px;text-align:center;font-size:13px;line-height:16px;color:#000;font-weight:normal;white-space:nowrap;overflow:visible;">1 773,61 €</div>
<div style="position:absolute;left:674px;top:261px;width:83px;height:17px;text-align:center;font-size:13px;line-height:16px;color:#000;font-weight:normal;white-space:nowrap;overflow:visible;">1 627,23 €</div>
<div style="position:absolute;left:758px;top:261px;width:81px;height:17px;text-align:center;font-size:13px;line-height:16px;color:#000;font-weight:normal;white-space:nowrap;overflow:visible;">?</div>
<svg class="ic" style="left:0px;top:0px" width="1920" height="1080" viewBox="0 0 1920 1080"><path d="M75 204.5H840" stroke="#000"/><path d="M75 226.5H840" stroke="#000"/><path d="M75 243.5H840" stroke="#000"/><path d="M75 260.5H840" stroke="#000"/><path d="M75 277.5H840" stroke="#000"/><path d="M75.5 204V278" stroke="#000"/><path d="M169.5 204V278" stroke="#000"/><path d="M253.5 204V278" stroke="#000"/><path d="M337.5 204V278" stroke="#000"/><path d="M421.5 204V278" stroke="#000"/><path d="M505.5 204V278" stroke="#000"/><path d="M589.5 204V278" stroke="#000"/><path d="M673.5 204V278" stroke="#000"/><path d="M757.5 204V278" stroke="#000"/><path d="M839.5 204V278" stroke="#000"/><path d="M78 241 q1.5 -2 3 0 q1.5 2 3 0 q1.5 -2 3 0 q1.5 2 3 0 q1.5 -2 3 0 q1.5 2 3 0 q1.5 -2 3 0 q1.5 2 3 0 q1.5 -2 3 0" fill="none" stroke="#e03030" stroke-width="1"/><path d="M78 258 q1.5 -2 3 0 q1.5 2 3 0 q1.5 -2 3 0 q1.5 2 3 0 q1.5 -2 3 0 q1.5 2 3 0 q1.5 -2 3 0 q1.5 2 3 0 q1.5 -2 3 0" fill="none" stroke="#e03030" stroke-width="1"/></svg>
<div style="position:absolute;left:839px;top:243px;width:83px;height:18px;border:2px solid #000;"></div>
<div style="position:absolute;left:919px;top:258px;width:5px;height:5px;background:#000;"></div>
<div style="position:absolute;left:84px;top:297px;width:914px;height:341px;background:#fff;border:2px solid #000;border-radius:2px;"></div><svg class="ic" style="left:0px;top:0px" width="1920" height="1080" viewBox="0 0 1920 1080" font-family="Liberation Sans"><path d="M203.5 387.5H872.5" stroke="#b3b3b3"/><text x="199.0" y="391.5" font-size="12.4" text-anchor="end" fill="#000">1 600,00 €</text><path d="M203.5 410.5H872.5" stroke="#b3b3b3"/><text x="199.0" y="414.2" font-size="12.4" text-anchor="end" fill="#000">1 400,00 €</text><path d="M203.5 432.5H872.5" stroke="#b3b3b3"/><text x="199.0" y="437.0" font-size="12.4" text-anchor="end" fill="#000">1 200,00 €</text><path d="M203.5 455.5H872.5" stroke="#b3b3b3"/><text x="199.0" y="459.8" font-size="12.4" text-anchor="end" fill="#000">1 000,00 €</text><path d="M203.5 478.5H872.5" stroke="#b3b3b3"/><text x="199.0" y="482.5" font-size="12.4" text-anchor="end" fill="#000">800,00 €</text><path d="M203.5 501.5H872.5" stroke="#b3b3b3"/><text x="199.0" y="505.2" font-size="12.4" text-anchor="end" fill="#000">600,00 €</text><path d="M203.5 524.5H872.5" stroke="#b3b3b3"/><text x="199.0" y="528.0" font-size="12.4" text-anchor="end" fill="#000">400,00 €</text><path d="M203.5 546.5H872.5" stroke="#b3b3b3"/><text x="199.0" y="550.8" font-size="12.4" text-anchor="end" fill="#000">200,00 €</text><text x="199.0" y="573.5" font-size="12.4" text-anchor="end" fill="#000">0,00 €</text><path d="M208.5 387V575" stroke="#b3b3b3"/><path d="M872.5 387V575" stroke="#c4c4c4"/><path d="M203.5 569.5H873.5" stroke="#b3b3b3"/><path d="M291.5 569V575" stroke="#b3b3b3"/><path d="M374.5 569V575" stroke="#b3b3b3"/><path d="M457.5 569V575" stroke="#b3b3b3"/><path d="M540.5 569V575" stroke="#b3b3b3"/><path d="M623.5 569V575" stroke="#b3b3b3"/><path d="M706.5 569V575" stroke="#b3b3b3"/><path d="M789.5 569V575" stroke="#b3b3b3"/><text x="250.0" y="590.0" font-size="12.4" text-anchor="middle" fill="#000">2009 – 2010</text><rect x="229" y="408.9" width="41" height="160.6" fill="#004586"/><text x="250.0" y="402.0" font-size="12.4" text-anchor="middle" fill="#000">1 407,52 €</text><text x="333.0" y="590.0" font-size="12.4" text-anchor="middle" fill="#000">2010 – 2011</text><text x="416.0" y="590.0" font-size="12.4" text-anchor="middle" fill="#000">2011 – 2012</text><text x="499.0" y="590.0" font-size="12.4" text-anchor="middle" fill="#000">2012 – 2013</text><text x="582.0" y="590.0" font-size="12.4" text-anchor="middle" fill="#000">2013 – 2014</text><text x="665.0" y="590.0" font-size="12.4" text-anchor="middle" fill="#000">2014 – 2015</text><text x="748.0" y="590.0" font-size="12.4" text-anchor="middle" fill="#000">2015 – 2016</text><text x="831.0" y="590.0" font-size="12.4" text-anchor="middle" fill="#000">2016 -2017</text><rect x="810" y="533.2" width="41" height="36.3" fill="#004586"/><text x="831.0" y="526.3" font-size="12.4" text-anchor="middle" fill="#000">314,72 €</text><text x="541.2" y="331" font-size="16" text-anchor="middle" fill="#000">Consommation par an</text><path d="M462.5 333.5h157.5" stroke="#000" stroke-width="1.1"/><text x="539.7" y="365" font-size="14" text-anchor="middle" fill="#000">(Estimation)</text><text x="506.3" y="614.8" font-size="12" text-anchor="middle" fill="#000">Années</text><text transform="translate(115 486.5) rotate(-90)" x="0" y="0" font-size="11.6" text-anchor="middle" fill="#000">Euro</text><rect x="894.8" y="464.4" width="7.5" height="7.5" fill="#004586"/><text x="906.2" y="472" font-size="12.4" fill="#000">Tarifs estimés</text><path d="M906.2 473.5h77" stroke="#000" stroke-width="1"/></svg>
<div style="position:absolute;left:84px;top:657px;width:917px;height:340px;background:#fff;border:2px solid #000;border-radius:2px;"></div><svg class="ic" style="left:0px;top:0px" width="1920" height="1080" viewBox="0 0 1920 1080" font-family="Liberation Sans"><path d="M203.7 714.5H874.6" stroke="#b3b3b3"/><text x="199.2" y="718.0" font-size="12.4" text-anchor="end" fill="#000">2 000,00 €</text><path d="M203.7 735.5H874.6" stroke="#b3b3b3"/><text x="199.2" y="739.4" font-size="12.4" text-anchor="end" fill="#000">1 800,00 €</text><path d="M203.7 756.5H874.6" stroke="#b3b3b3"/><text x="199.2" y="760.7" font-size="12.4" text-anchor="end" fill="#000">1 600,00 €</text><path d="M203.7 778.5H874.6" stroke="#b3b3b3"/><text x="199.2" y="782.0" font-size="12.4" text-anchor="end" fill="#000">1 400,00 €</text><path d="M203.7 799.5H874.6" stroke="#b3b3b3"/><text x="199.2" y="803.4" font-size="12.4" text-anchor="end" fill="#000">1 200,00 €</text><path d="M203.7 820.5H874.6" stroke="#b3b3b3"/><text x="199.2" y="824.8" font-size="12.4" text-anchor="end" fill="#000">1 000,00 €</text><path d="M203.7 842.5H874.6" stroke="#b3b3b3"/><text x="199.2" y="846.1" font-size="12.4" text-anchor="end" fill="#000">800,00 €</text><path d="M203.7 863.5H874.6" stroke="#b3b3b3"/><text x="199.2" y="867.5" font-size="12.4" text-anchor="end" fill="#000">600,00 €</text><path d="M203.7 884.5H874.6" stroke="#b3b3b3"/><text x="199.2" y="888.8" font-size="12.4" text-anchor="end" fill="#000">400,00 €</text><path d="M203.7 906.5H874.6" stroke="#b3b3b3"/><text x="199.2" y="910.1" font-size="12.4" text-anchor="end" fill="#000">200,00 €</text><text x="199.2" y="931.5" font-size="12.4" text-anchor="end" fill="#000">0,00 €</text><path d="M208.5 714V933" stroke="#b3b3b3"/><path d="M874.5 714V933" stroke="#c4c4c4"/><path d="M203.7 927.5H875.6" stroke="#b3b3b3"/><path d="M291.5 927V933" stroke="#b3b3b3"/><path d="M375.5 927V933" stroke="#b3b3b3"/><path d="M458.5 927V933" stroke="#b3b3b3"/><path d="M541.5 927V933" stroke="#b3b3b3"/><path d="M624.5 927V933" stroke="#b3b3b3"/><path d="M708.5 927V933" stroke="#b3b3b3"/><path d="M791.5 927V933" stroke="#b3b3b3"/><text x="250.3" y="948.0" font-size="12.4" text-anchor="middle" fill="#000">2009 – 2010</text><rect x="229" y="767.4" width="41" height="160.1" fill="#314004"/><text x="250.3" y="760.5" font-size="12.4" text-anchor="middle" fill="#000">1 494,93 €</text><text x="333.6" y="948.0" font-size="12.4" text-anchor="middle" fill="#000">2010 – 2011</text><rect x="313" y="776.0" width="41" height="151.5" fill="#314004"/><text x="333.6" y="769.1" font-size="12.4" text-anchor="middle" fill="#000">1 414,59 €</text><text x="416.8" y="948.0" font-size="12.4" text-anchor="middle" fill="#000">2011 – 2012</text><rect x="396" y="782.9" width="41" height="144.6" fill="#314004"/><text x="416.8" y="776.0" font-size="12.4" text-anchor="middle" fill="#000">1 349,55 €</text><text x="500.0" y="948.0" font-size="12.4" text-anchor="middle" fill="#000">2012 – 2013</text><rect x="479" y="771.7" width="41" height="155.8" fill="#314004"/><text x="500.0" y="764.8" font-size="12.4" text-anchor="middle" fill="#000">1 454,90 €</text><text x="583.3" y="948.0" font-size="12.4" text-anchor="middle" fill="#000">2013 – 2014</text><rect x="562" y="775.3" width="41" height="152.2" fill="#314004"/><text x="583.3" y="768.4" font-size="12.4" text-anchor="middle" fill="#000">1 421,43 €</text><text x="666.5" y="948.0" font-size="12.4" text-anchor="middle" fill="#000">2014 – 2015</text><rect x="646" y="737.7" width="41" height="189.8" fill="#314004"/><text x="666.5" y="730.8" font-size="12.4" text-anchor="middle" fill="#000">1 773,61 €</text><text x="749.7" y="948.0" font-size="12.4" text-anchor="middle" fill="#000">2015 – 2016</text><rect x="729" y="753.3" width="41" height="174.2" fill="#314004"/><text x="749.7" y="746.4" font-size="12.4" text-anchor="middle" fill="#000">1 627,23 €</text><text x="833.0" y="948.0" font-size="12.4" text-anchor="middle" fill="#000">2016 -2017</text><text x="541.8" y="690" font-size="16" text-anchor="middle" fill="#000">Tarif EDF</text><path d="M508.0 692.5h67.5" stroke="#000" stroke-width="1.1"/><text x="506.8" y="972.5" font-size="12" text-anchor="middle" fill="#000">Années</text><text transform="translate(115 829.7) rotate(-90)" x="0" y="0" font-size="11.6" text-anchor="middle" fill="#000">Euro</text><rect x="897.2" y="822.8" width="7.5" height="7.5" fill="#314004"/><text x="908.8" y="830.5" font-size="12.4" fill="#000">Tarifs factures</text><path d="M908.8 832.0h77.5" stroke="#000" stroke-width="1"/></svg>
<div style="position:absolute;left:1897px;top:164px;width:15px;height:861px;background:#ddd4c1;border-left:1px solid #8f8877;border-right:1px solid #8f8877;"></div>
<div style="position:absolute;left:1898px;top:165px;width:13px;height:6px;background:#a8a293;"></div>
<div style="position:absolute;left:1900px;top:167px;width:9px;height:2px;background:#111;"></div>
<div style="position:absolute;left:1898px;top:171px;width:13px;height:14px;background:linear-gradient(90deg,#fbfaf8,#efebe3);border:1px solid #9a9384;border-radius:3px 3px 0 0;"></div>
<svg class="ic" style="left:1900px;top:175px" width="9" height="5" viewBox="0 0 9 5"><path d="M0 5h9l-4.5-5z" fill="#111"/></svg>
<div style="position:absolute;left:1898px;top:185px;width:13px;height:404px;background:linear-gradient(90deg,#fdfcfa 0%,#f6f3ee 60%,#ebe5da 100%);border-bottom:1px solid #8f8877;"></div>
<svg class="ic" style="left:1900px;top:383px" width="9" height="6" viewBox="0 0 9 6"><path d="M1 .5h7M1 2.5h7M1 4.5h7" stroke="#b8b0a0"/></svg>
<div style="position:absolute;left:1898px;top:1010px;width:13px;height:15px;background:linear-gradient(90deg,#fbfaf8,#efebe3);border:1px solid #9a9384;border-radius:0 0 3px 3px;"></div>
<svg class="ic" style="left:1900px;top:1016px" width="9" height="5" viewBox="0 0 9 5"><path d="M0 0h9l-4.5 5z" fill="#111"/></svg>
<div style="position:absolute;left:1912px;top:130px;width:8px;height:928px;background:#ebe4d6;border-left:1px solid #8f8877;"></div>
<div style="position:absolute;left:1913px;top:558px;width:7px;height:72px;background:#8a7f70;"></div>
<svg class="ic" style="left:1914px;top:588px" width="5" height="10" viewBox="0 0 5 10"><path d="M5 0v10L0 5z" fill="#f4f0e8"/></svg>
<div style="position:absolute;left:43px;top:1025px;width:1854px;height:15px;background:#ddd4c1;border-top:1px solid #8f8877;border-bottom:1px solid #8f8877;"></div>
<div style="position:absolute;left:43px;top:1026px;width:15px;height:13px;background:linear-gradient(180deg,#fbfaf8,#efebe3);border-right:1px solid #9a9384;border-radius:3px 0 0 3px;"></div>
<svg class="ic" style="left:50px;top:1029px" width="5" height="8" viewBox="0 0 5 8"><path d="M5 0v8L0 4z" fill="#111"/></svg>
<div style="position:absolute;left:58px;top:1026px;width:869px;height:13px;background:linear-gradient(180deg,#fdfcfa 0%,#f5f2ec 60%,#ece6dc 100%);border-right:1px solid #8f8877;"></div>
<svg class="ic" style="left:488px;top:1029px" width="7" height="8" viewBox="0 0 7 8"><path d="M.5 0v8M3.5 0v8M6.5 0v8" stroke="#b8b0a0"/></svg>
<div style="position:absolute;left:1877px;top:1025px;width:15px;height:15px;background:linear-gradient(180deg,#fbfaf8,#efebe3);border:1px solid #9a9384;border-radius:0 3px 3px 0;"></div>
<svg class="ic" style="left:1883px;top:1029px" width="5" height="8" viewBox="0 0 5 8"><path d="M0 0v8L5 4z" fill="#111"/></svg>
<div style="position:absolute;left:1892px;top:1026px;width:5px;height:13px;background:#a8a293;"></div>
<div style="position:absolute;left:1894px;top:1028px;width:1px;height:9px;background:#111;"></div>
<div style="position:absolute;left:43px;top:1040px;width:1869px;height:18px;background:#e9e1d3;"></div>
<div style="position:absolute;left:43px;top:1057px;width:1877px;height:1px;background:#a59d8c;"></div>
<svg class="ic" style="left:50px;top:1040px" width="100" height="18" viewBox="0 0 100 18"><path d="M5.5 4v9" stroke="#b5ad9e" stroke-width="1.3"/><path d="M12 4v9L6 8.5z" fill="#b5ad9e"/><path d="M29 4v9l-6-4.5z" fill="#b5ad9e"/><path d="M40 4v9l6.5-4.5z" fill="#b5ad9e"/><path d="M58 4v9l6-4.5z" fill="#b5ad9e"/><path d="M65 4v9" stroke="#b5ad9e" stroke-width="1.3"/><path d="M85.3 3.5v10.5M80 8.7h10.5" stroke="#111" stroke-width="3.2"/></svg>
<div style="position:absolute;left:151px;top:1040px;width:93px;height:18px;background:#e7dece;border:1px solid #a59d8c;border-top:none;"></div>
<div style="position:absolute;left:151px;top:1041px;width:92px;text-align:center;font-size:12.5px;line-height:15px;color:#111;font-weight:normal;letter-spacing:0.5px;">Compteur</div>
<div style="position:absolute;left:243px;top:1040px;width:85px;height:18px;background:#e7dece;border:1px solid #a59d8c;border-top:none;"></div>
<div style="position:absolute;left:243px;top:1041px;width:84px;text-align:center;font-size:12.5px;line-height:15px;color:#111;font-weight:normal;letter-spacing:0.5px;">Analyses</div>
<div style="position:absolute;left:327px;top:1040px;width:97px;height:18px;background:#e7dece;border:1px solid #a59d8c;border-top:none;"></div>
<div style="position:absolute;left:327px;top:1041px;width:96px;text-align:center;font-size:12.5px;line-height:15px;color:#111;font-weight:normal;letter-spacing:0.5px;">Graphique</div>
<div style="position:absolute;left:423px;top:1040px;width:80px;height:18px;background:#e7dece;border:1px solid #a59d8c;border-top:none;"></div>
<div style="position:absolute;left:423px;top:1041px;width:79px;text-align:center;font-size:12.5px;line-height:15px;color:#111;font-weight:normal;letter-spacing:0.5px;">Resume</div>
<div style="position:absolute;left:502px;top:1040px;width:74px;height:18px;background:#fdfcfa;border:1px solid #a59d8c;border-top:none;"></div>
<div style="position:absolute;left:502px;top:1041px;width:73px;text-align:center;font-size:12.5px;line-height:15px;color:#111;font-weight:bold;letter-spacing:0.2px;">Graph2</div>
<div style="position:absolute;left:575px;top:1040px;width:88px;height:18px;background:#e7dece;border:1px solid #a59d8c;border-top:none;"></div>
<div style="position:absolute;left:575px;top:1041px;width:87px;text-align:center;font-size:12.5px;line-height:15px;color:#111;font-weight:normal;letter-spacing:0.5px;">Bain-Fuel</div>
<div style="position:absolute;left:43px;top:1058px;width:1877px;height:22px;background:#ebe3d6;border-top:1px solid #b9b1a2;"></div>
<div style="position:absolute;left:53px;top:1064px;font-size:12.5px;line-height:1;color:#1a1a1a;font-weight:normal;white-space:nowrap;letter-spacing:0.55px;">Feuille 5 sur 6</div>
<div style="position:absolute;left:804px;top:1064px;font-size:12.5px;line-height:1;color:#1a1a1a;font-weight:normal;white-space:nowrap;letter-spacing:0.5px;">Par défaut</div>
<div style="position:absolute;left:1232px;top:1062px;width:1px;height:16px;background:#e0d8ca;"></div>
<svg class="ic" style="left:1240px;top:1063px" width="12" height="12" viewBox="0 0 12 12"><rect x="0" y="3" width="9" height="7" fill="#7a7468"/><path d="M10.5 2v9M9 2h3M9 11h3" stroke="#7a7468" stroke-width=".9"/></svg>
<svg class="ic" style="left:1269px;top:1062px" width="14" height="14" viewBox="0 0 14 14"><path d="M.5 1.5h8M.5 1.5v11h9V9" fill="none" stroke="#7a7468"/><path d="M11 2v7M7.8 3.5l6.4 4M14.2 3.5l-6.4 4" stroke="#c02020" stroke-width="1.1"/></svg>
<div style="position:absolute;left:1490px;top:1064px;font-size:12.5px;line-height:1;color:#1a1a1a;font-weight:normal;white-space:nowrap;letter-spacing:0.5px;">Somme=0</div>
<svg class="ic" style="left:1734px;top:1062px" width="130" height="14" viewBox="0 0 130 14"><path d="M1 7.5h8" stroke="#555" stroke-width="1.5"/><path d="M15 7.5h96" stroke="#9a9488" stroke-width="1.5"/><circle cx="62" cy="7.5" r="4.5" fill="#fff" stroke="#6a655c"/><path d="M118 7.5h8M122 3.5v8" stroke="#555" stroke-width="1.5"/></svg>
<div style="position:absolute;left:1873px;top:1064px;font-size:12.5px;line-height:1;color:#1a1a1a;font-weight:normal;white-space:nowrap;letter-spacing:0.4px;">100 %</div>
<svg class="ic" style="left:4px;top:3px" width="30" height="30" viewBox="0 0 30 30"><defs><radialGradient id="orb" cx=".5" cy=".4" r=".6"><stop offset="0" stop-color="#9ab8e0"/><stop offset=".6" stop-color="#3f63a8"/><stop offset="1" stop-color="#1a2a50"/></radialGradient></defs><circle cx="15" cy="15" r="13.5" fill="url(#orb)"/><path d="M19 6q-10 4-9 13q2 5 7 3q5-3 2-16z" fill="#f0f4fa"/></svg>
<svg class="ic" style="left:4px;top:40px" width="32" height="24" viewBox="0 0 32 24"><rect x="6" y="0" width="20" height="10" fill="#8aa8c8"/><rect x="0" y="12" width="16" height="10" fill="#111"/><rect x="14" y="8" width="18" height="12" fill="#e8e8e8"/><rect x="6" y="0" width="20" height="4" fill="#c8d8e8"/><path d="M14 2v9l-3-3M14 11l3-3" stroke="#2a5aa0" stroke-width="1.5" fill="none"/><rect x="20" y="11" width="10" height="2" fill="#222"/></svg>
<div style="position:absolute;left:3.5px;top:75px;width:31px;height:31px;border:1.5px solid #5aa6ee;border-radius:4px;box-shadow:0 0 3px 1px rgba(40,120,220,.8);background:#0c0c10;"></div>
<svg class="ic" style="left:5px;top:77px" width="28" height="28" viewBox="0 0 28 28"><defs><radialGradient id="ffg" cx=".45" cy=".35" r=".7"><stop offset="0" stop-color="#4ab0f0"/><stop offset="1" stop-color="#1a3aa0"/></radialGradient><linearGradient id="ffo" x1="0" y1="0" x2="1" y2="1"><stop offset="0" stop-color="#f8c030"/><stop offset=".5" stop-color="#f06a20"/><stop offset="1" stop-color="#d83818"/></linearGradient></defs><circle cx="14" cy="14" r="12.5" fill="url(#ffo)"/><circle cx="15.5" cy="12.5" r="9" fill="url(#ffg)"/><path d="M3 9q2-5 6-6q-2 3-1 5q3-2 6 0q-4 1-4 5q0 4 5 5q4 0 6-3q-1 6-8 7q-8 0-10-6q-1-4 0-7z" fill="url(#ffo)"/></svg>
<div style="position:absolute;left:3.5px;top:114px;width:31px;height:31px;border:1.5px solid #5aa6ee;border-radius:4px;box-shadow:0 0 3px 1px rgba(40,120,220,.8);background:#0c0c10;"></div>
<svg class="ic" style="left:7px;top:117px" width="26" height="25" viewBox="0 0 26 25"><rect x="1" y="3" width="24" height="20" fill="#f0f0f0"/><path d="M1 13l12 8 12-8v10H1z" fill="#f5d040"/><path d="M1 3h24v6H1z" fill="#e0e8f0"/><path d="M5 6q0-5 5-5t5 5" fill="none" stroke="#888" stroke-width="2"/><rect x="16" y="6" width="8" height="8" fill="#a8c8f0"/></svg>
<svg class="ic" style="left:6px;top:155px" width="28" height="30" viewBox="0 0 28 30"><path d="M8 2q-7 0-7 7q0 2 1 4q-1 2-1 3q0 12 13 12q2 0 3-1q2 1 4 1q7 0 7-7q0-2-1-4q1-2 1-4q0-12-13-12q-2 0-3 1q-2-1-4-1z" fill="#12a8e8"/><text x="7" y="22" font-family="Liberation Sans" font-size="18" font-weight="bold" fill="#fff">S</text></svg>
<div style="position:absolute;left:3.5px;top:206px;width:31px;height:33px;border:1.5px solid #5aa6ee;border-radius:4px;box-shadow:0 0 3px 1px rgba(40,120,220,.8);background:#0c0c10;"></div>
<svg class="ic" style="left:8px;top:209px" width="24" height="28" viewBox="0 0 24 28"><path d="M1 1h15l7 7v19H1z" fill="#e8f4e0" stroke="#2e8a2e" stroke-width="1.6"/><path d="M16 1v7h7z" fill="#2e8a2e"/><rect x="4" y="12" width="15" height="11" fill="#4aa83a"/><path d="M4 15.5h15M4 19h15M9 12v11M14 12v11" stroke="#e8f4e0" stroke-width="1"/></svg>
<svg class="ic" style="left:5px;top:680px" width="30" height="24" viewBox="0 0 30 24"><path d="M1 3h10l2 3h16v17H1z" fill="#5a9ad8"/><path d="M1 8h28v15H1z" fill="#8ac0f0"/><path d="M1 8h28" stroke="#c8e0f8"/></svg>
<svg class="ic" style="left:6px;top:719px" width="28" height="26" viewBox="0 0 28 26"><rect x="1" y="1" width="26" height="24" fill="#c8d8e8" stroke="#7a9ab8"/><rect x="3" y="3" width="10" height="9" fill="#5a9ad8"/><rect x="15" y="3" width="10" height="9" fill="#5a9ad8"/><rect x="3" y="14" width="10" height="9" fill="#5a9ad8"/><rect x="15" y="14" width="10" height="9" fill="#5a9ad8"/></svg>
<svg class="ic" style="left:0px;top:753px" width="40" height="26" viewBox="0 0 40 26"><ellipse cx="8.5" cy="13" rx="7.5" ry="11" fill="#fff"/><ellipse cx="28.5" cy="13" rx="7.5" ry="11" fill="#fff"/><circle cx="13" cy="14" r="2.3" fill="#111"/><circle cx="33" cy="14" r="2.3" fill="#111"/></svg>
<svg class="ic" style="left:5px;top:787px" width="30" height="28" viewBox="0 0 30 28"><rect x="1" y="1" width="28" height="26" fill="#b8c8d8" stroke="#5a6a7a"/><rect x="3" y="4" width="24" height="15" fill="#4a7ab8"/><circle cx="15" cy="11" r="6" fill="#d8d8d8" stroke="#888" stroke-width="2"/><circle cx="15" cy="11" r="2" fill="#888"/><path d="M3 20h24v5H3z" fill="#e8e8e8"/></svg>
<svg class="ic" style="left:4px;top:819px" width="32" height="34" viewBox="0 0 32 34"><rect x="2" y="4" width="20" height="24" fill="#f0f0f0" stroke="#aaa"/><rect x="8" y="1" width="9" height="6" fill="#ccc" stroke="#888"/><path d="M12 10h18v16l-6 6H12z" fill="#fafafa" stroke="#aaa"/></svg>
<svg class="ic" style="left:6px;top:858px" width="28" height="28" viewBox="0 0 28 28"><circle cx="14" cy="14" r="13" fill="#1a6ac0"/><circle cx="14" cy="14" r="11.5" fill="#2a86e0"/><text x="4" y="20" font-family="Liberation Sans" font-size="15" font-weight="bold" font-style="italic" fill="#fff">hp</text></svg>
<svg class="ic" style="left:7px;top:886px" width="26" height="26" viewBox="0 0 26 26"><rect x="1" y="5" width="24" height="19" fill="#e8c070" stroke="#a07020"/><path d="M1 5h24v6H1z" fill="#f0a030"/><text x="5" y="22" font-family="Liberation Sans" font-size="12" font-weight="bold" fill="#1a3a8a">10</text><path d="M14 1l4 4h-8z" fill="#f0d020"/></svg>
<svg class="ic" style="left:10px;top:918px" width="20" height="24" viewBox="0 0 20 24"><path d="M5 1l8 13M15 1l-8 13" stroke="#ddd" stroke-width="1.8"/><circle cx="5" cy="18" r="3.5" fill="none" stroke="#eee" stroke-width="2"/><circle cx="15" cy="18" r="3.5" fill="none" stroke="#eee" stroke-width="2"/></svg>
<svg class="ic" style="left:7px;top:944px" width="26" height="26" viewBox="0 0 26 26"><path d="M1 9h5l6-6v20l-6-6H1z" fill="#eee"/><path d="M15 8q3 5 0 10M18 5q5 8 0 16M21 2q7 11 0 22" fill="none" stroke="#eee" stroke-width="1.8"/></svg>
<svg class="ic" style="left:9px;top:973px" width="22" height="26" viewBox="0 0 22 26"><rect x="4" y="1" width="14" height="11" fill="none" stroke="#eee" stroke-width="2"/><path d="M11 12v8M2 20h18" stroke="#eee" stroke-width="2"/><circle cx="11" cy="20" r="2.5" fill="#eee"/></svg>
<svg class="ic" style="left:16px;top:1005px" width="6" height="9" viewBox="0 0 6 9"><path d="M0 0v9l6-4.5z" fill="#ddd"/></svg>
<div style="position:absolute;left:0px;top:1022px;font-size:15px;line-height:1;color:#e8e4e0;font-weight:normal;white-space:nowrap;letter-spacing:0px;">11:34</div>
<svg class="ic" style="left:6px;top:1043px" width="28" height="32" viewBox="0 0 28 32"><path d="M3 5h22l-2.5 25H5.5z" fill="#9ab8d8" stroke="#6a88a8"/><rect x="2" y="2" width="24" height="4" rx="1" fill="#c8d8e8" stroke="#6a88a8"/><path d="M9 9v18M14 9v18M19 9v18" stroke="#d8e8f8" stroke-width="1.5"/></svg>
</body></html>
